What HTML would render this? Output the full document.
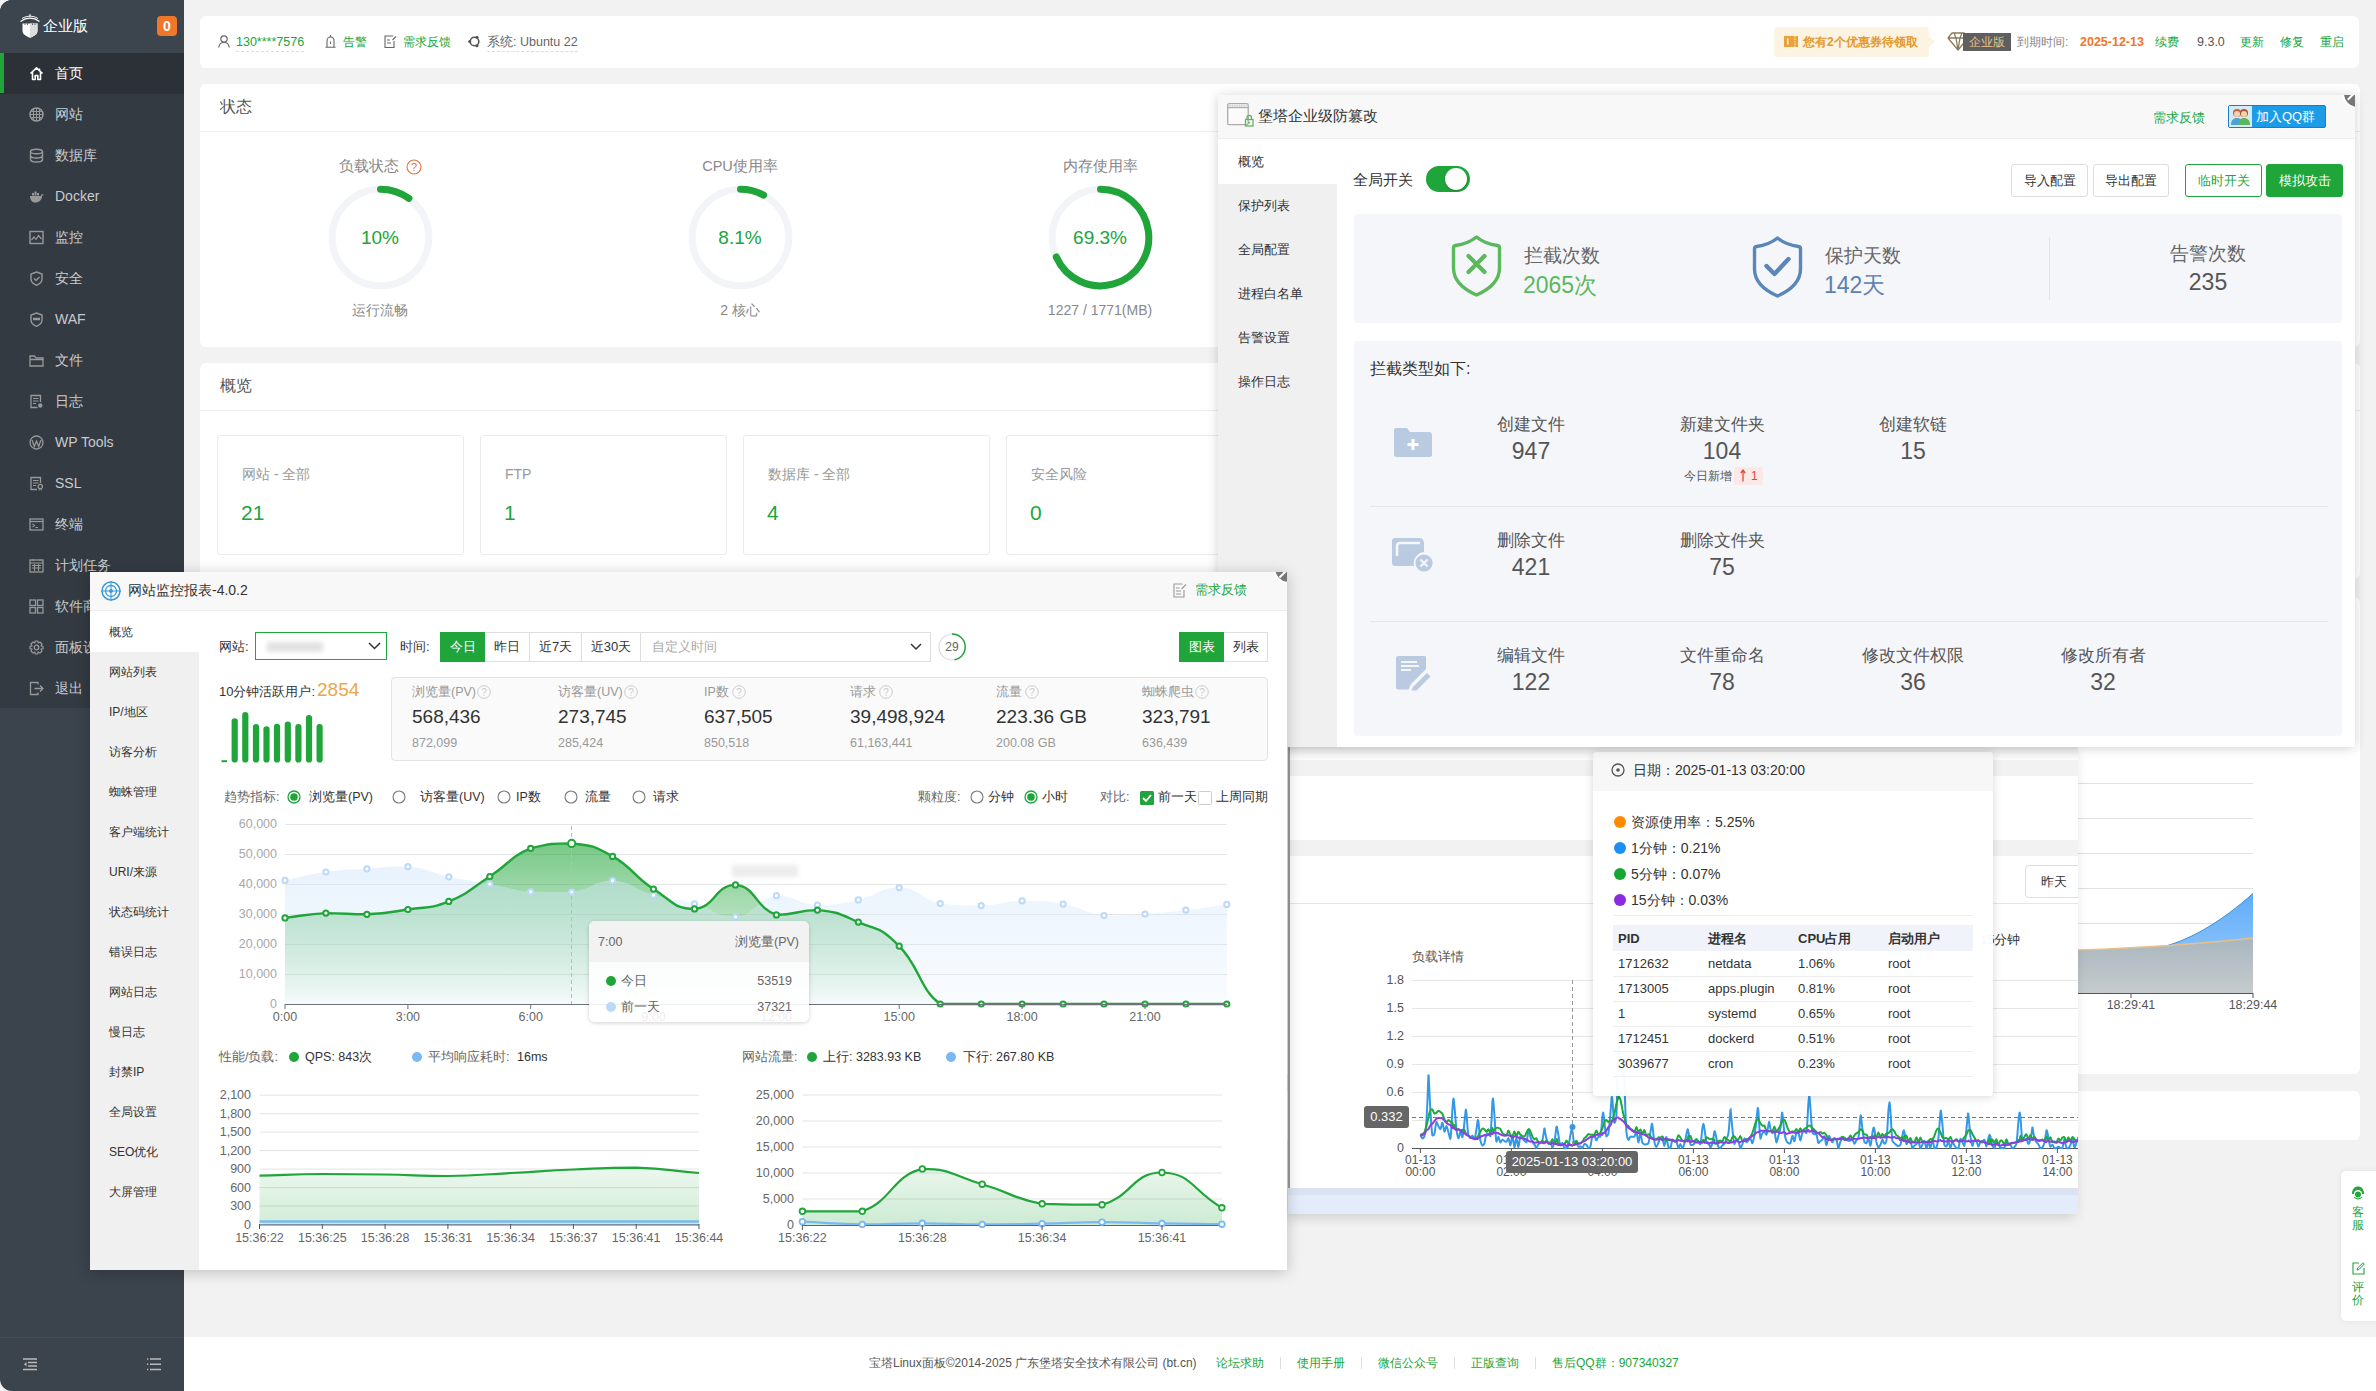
<!DOCTYPE html>
<html><head><meta charset="utf-8">
<style>
*{margin:0;padding:0;box-sizing:border-box}
html,body{width:2376px;height:1391px;overflow:hidden}
body{background:#f2f2f2;font-family:"Liberation Sans",sans-serif;font-size:14px;color:#666;position:relative}
.a{position:absolute}
.t{position:absolute;white-space:nowrap;line-height:1}
.card{position:absolute;background:#fff;border-radius:6px}
.g{color:#20a53a}
svg{position:absolute;overflow:visible}
#side{position:absolute;left:0;top:0;width:184px;height:1391px;background:#3b434c;border-radius:12px 0 0 12px;overflow:hidden}
#side .it{position:absolute;left:0;width:184px;height:41px;color:#c9cbcd;font-size:14px;line-height:41px;padding-left:55px}
#side .it svg{left:29px;top:13px}
#side .cur{background:#2c3138;color:#fff}
#side .cur:before{content:"";position:absolute;left:0;top:0;width:4px;height:40px;background:#20a53a}
.dash{border-bottom:1px dashed #ddd}
.ttl{position:absolute;left:20px;top:15px;font-size:16px;color:#555;line-height:1;white-space:nowrap}
.hline{position:absolute;left:0;height:1px;background:#eee}
.sub{position:absolute;top:72px;width:247px;height:120px;border:1px solid #ebebeb;border-radius:3px}
.sub .l{position:absolute;left:24px;top:30px;font-size:14px;color:#999;white-space:nowrap;line-height:16px}
.sub .v{position:absolute;left:23px;top:66px;font-size:21px;color:#20a53a;line-height:22px}

</style></head><body>
<!-- SIDEBAR -->
<div id="side">
  <div class="a" style="left:0;top:0;width:184px;height:53px;background:#3c444e"></div>
  <div class="a" style="left:0;top:53px;width:184px;height:655px;background:#333a42"></div>
  <div class="a" style="left:0;top:1337px;width:184px;height:1px;background:#434c56"></div>
  <!-- logo -->
  <svg style="left:19px;top:14px" width="22" height="24" viewBox="0 0 22 24">
    <path d="M1.5 7.5 C5 5 8 4.2 11 4.2 C14 4.2 17 5 20.5 7.5" fill="none" stroke="#fff" stroke-width="1.3"/>
    <path d="M3 4.5 C6 2.8 8.5 2.2 11 2.2 C13.5 2.2 16 2.8 19 4.5" fill="none" stroke="#fff" stroke-width="1"/>
    <path d="M11 0.3 V2.5" stroke="#fff" stroke-width="1.2"/>
    <path d="M3.5 9.5 H18.5 V17 C18.5 20 15 22.5 11 23.8 C7 22.5 3.5 20 3.5 17 Z" fill="#fff"/>
    <path d="M11 9.5 V23.8 C15 22.5 18.5 20 18.5 17 V9.5 Z" fill="#dcdcdc"/>
    <path d="M6 9.5 V11 M8.5 9.5 V11 M13.5 9.5 V11 M16 9.5 V11" stroke="#3c444e" stroke-width="0.8"/>
  </svg>
  <div class="t" style="left:43px;top:18px;font-size:15px;color:#fff">企业版</div>
  <div class="a" style="left:157px;top:16px;width:20px;height:20px;background:#f0762a;border-radius:4px;color:#fff;font-weight:bold;font-size:14px;line-height:20px;text-align:center">0</div>
  <!-- menu -->
  <div class="it cur" style="top:53px"><svg width="15" height="15" viewBox="0 0 15 15"><path d="M1.5 7.5 L7.5 1.8 L13.5 7.5 M3.5 6 V13.5 H6.2 V9.5 H8.8 V13.5 H11.5 V6" fill="none" stroke="#fff" stroke-width="1.6" stroke-linejoin="round"/><path d="M10.5 2.5 V4.5" stroke="#fff" stroke-width="1.5"/></svg>首页</div>
  <div class="it" style="top:94px"><svg width="15" height="15" viewBox="0 0 15 15"><circle cx="7.5" cy="7.5" r="6.5" fill="none" stroke="#999" stroke-width="1.5"/><path d="M1 7.5 H14 M7.5 1 V14 M2.5 4.5 H12.5 M2.5 10.5 H12.5 M4.5 2 V13 M10.5 2 V13" stroke="#999" stroke-width="1"/></svg>网站</div>
  <div class="it" style="top:135px"><svg width="15" height="15" viewBox="0 0 15 15"><ellipse cx="7.5" cy="3.5" rx="6" ry="2.3" fill="none" stroke="#999" stroke-width="1.4"/><path d="M1.5 3.5 V11.5 C1.5 13 4 14 7.5 14 C11 14 13.5 13 13.5 11.5 V3.5 M1.5 7.5 C1.5 9 4 10 7.5 10 C11 10 13.5 9 13.5 7.5" fill="none" stroke="#999" stroke-width="1.4"/></svg>数据库</div>
  <div class="it" style="top:176px"><svg width="15" height="15" viewBox="0 0 15 15"><path d="M1 7 H13 C13 11 10 13.5 6 13.5 C3 13.5 1 11 1 7 Z" fill="#999"/><rect x="3" y="4" width="2" height="2.5" fill="#999"/><rect x="5.5" y="2.5" width="2" height="4" fill="#999"/><rect x="8" y="4" width="2" height="2.5" fill="#999"/><path d="M12 6.5 C13 5.5 14.5 6 14.5 6" stroke="#999" stroke-width="1.2" fill="none"/></svg>Docker</div>
  <div class="it" style="top:217px"><svg width="15" height="15" viewBox="0 0 15 15"><rect x="1" y="1.5" width="13" height="12" fill="none" stroke="#999" stroke-width="1.4"/><path d="M2.5 10 L5 7 L7 9.5 L9.5 5.5 L12.5 9" fill="none" stroke="#999" stroke-width="1.2"/></svg>监控</div>
  <div class="it" style="top:258px"><svg width="15" height="15" viewBox="0 0 15 15"><path d="M7.5 1 L13 3 V8 C13 11 10.5 13 7.5 14.3 C4.5 13 2 11 2 8 V3 Z" fill="none" stroke="#999" stroke-width="1.4"/><path d="M5 7.5 L7 9.5 L10.5 6" fill="none" stroke="#999" stroke-width="1.3"/></svg>安全</div>
  <div class="it" style="top:299px"><svg width="15" height="15" viewBox="0 0 15 15"><path d="M7.5 1 L13 3 V8 C13 11 10.5 13 7.5 14.3 C4.5 13 2 11 2 8 V3 Z" fill="none" stroke="#999" stroke-width="1.4"/><path d="M4 7 H11" stroke="#999" stroke-width="2.5"/></svg>WAF</div>
  <div class="it" style="top:340px"><svg width="15" height="15" viewBox="0 0 15 15"><path d="M1 3 H5.5 L7 4.8 H14 V13 H1 Z M1 6.5 H14" fill="none" stroke="#999" stroke-width="1.3"/></svg>文件</div>
  <div class="it" style="top:381px"><svg width="15" height="15" viewBox="0 0 15 15"><path d="M11.5 8 V1.5 H2 V13.5 H8.5" fill="none" stroke="#999" stroke-width="1.3"/><path d="M4 4.5 H9.5 M4 7 H9.5 M4 9.5 H7" stroke="#999" stroke-width="1.1"/><circle cx="11.3" cy="11.5" r="2.2" fill="#999"/></svg>日志</div>
  <div class="it" style="top:422px"><svg width="15" height="15" viewBox="0 0 15 15"><circle cx="7.5" cy="7.5" r="6.5" fill="none" stroke="#999" stroke-width="1.3"/><path d="M3 5 L5.3 11.5 L7.5 6 L9.7 11.5 L12 5" fill="none" stroke="#999" stroke-width="1.3"/></svg>WP Tools</div>
  <div class="it" style="top:463px"><svg width="15" height="15" viewBox="0 0 15 15"><path d="M11.5 7 V1.5 H2 V13.5 H8" fill="none" stroke="#999" stroke-width="1.3"/><path d="M4 4.5 H9.5 M4 7 H9.5 M4 9.5 H7" stroke="#999" stroke-width="1.1"/><circle cx="11.3" cy="10.5" r="2.2" fill="none" stroke="#999" stroke-width="1.2"/><path d="M10.3 12.5 V14.5 M12.3 12.5 V14.5" stroke="#999"/></svg>SSL</div>
  <div class="it" style="top:504px"><svg width="15" height="15" viewBox="0 0 15 15"><rect x="1" y="2" width="13" height="11" fill="none" stroke="#999" stroke-width="1.3"/><path d="M1 4.5 H14" stroke="#999" stroke-width="1.3"/><path d="M3.5 7 L5.5 8.5 L3.5 10 M6.5 10.5 H9" fill="none" stroke="#999" stroke-width="1.1"/></svg>终端</div>
  <div class="it" style="top:545px"><svg width="15" height="15" viewBox="0 0 15 15"><rect x="1" y="2" width="13" height="12" fill="none" stroke="#999" stroke-width="1.3"/><path d="M1 5 H14 M4 1 V3 M11 1 V3 M3 7.5 H12 M3 10 H12 M5.5 6 V13 M9.5 6 V13" stroke="#999" stroke-width="1"/></svg>计划任务</div>
  <div class="it" style="top:586px"><svg width="15" height="15" viewBox="0 0 15 15"><rect x="1" y="1" width="5.5" height="5.5" fill="none" stroke="#999" stroke-width="1.3"/><rect x="8.5" y="1" width="5.5" height="5.5" fill="none" stroke="#999" stroke-width="1.3"/><rect x="1" y="8.5" width="5.5" height="5.5" fill="none" stroke="#999" stroke-width="1.3"/><rect x="8.5" y="8.5" width="5.5" height="5.5" fill="none" stroke="#999" stroke-width="1.3"/></svg>软件商店</div>
  <div class="it" style="top:627px"><svg width="15" height="15" viewBox="0 0 15 15"><circle cx="7.5" cy="7.5" r="2.3" fill="none" stroke="#999" stroke-width="1.3"/><path d="M6.3 1 H8.7 L9.2 3 L11 2 L13 4 L12 5.8 L14 6.3 V8.7 L12 9.2 L13 11 L11 13 L9.2 12 L8.7 14 H6.3 L5.8 12 L4 13 L2 11 L3 9.2 L1 8.7 V6.3 L3 5.8 L2 4 L4 2 L5.8 3 Z" fill="none" stroke="#999" stroke-width="1.2" stroke-linejoin="round"/></svg>面板设置</div>
  <div class="it" style="top:668px"><svg width="15" height="15" viewBox="0 0 15 15"><path d="M9 3.5 V1.5 H1.5 V13.5 H9 V11.5" fill="none" stroke="#999" stroke-width="1.3"/><path d="M5.5 7.5 H14 M11 4.5 L14 7.5 L11 10.5" fill="none" stroke="#999" stroke-width="1.3"/></svg>退出</div>
  <!-- bottom icons -->
  <svg style="left:23px;top:1358px" width="14" height="13" viewBox="0 0 14 13"><path d="M0 1 H14 M5 4.5 H14 M5 8 H14 M0 11.5 H14" stroke="#bbb" stroke-width="1.4"/><path d="M3.5 4 L1 6.2 L3.5 8.5 Z" fill="#bbb"/></svg>
  <svg style="left:147px;top:1358px" width="14" height="13" viewBox="0 0 14 13"><path d="M3 1 H14 M3 6.2 H14 M3 11.5 H14" stroke="#bbb" stroke-width="1.4"/><path d="M0 1 H1.3 M0 6.2 H1.3 M0 11.5 H1.3" stroke="#bbb" stroke-width="1.4"/></svg>
</div>

<!-- FOOTER -->
<div class="a" style="left:184px;top:1337px;width:2192px;height:54px;background:#fff"></div>
<div class="t" style="left:869px;top:1357px;font-size:12px;color:#555">宝塔Linux面板©2014-2025 广东堡塔安全技术有限公司 (bt.cn)</div>
<div class="t g" style="left:1216px;top:1357px;font-size:12px">论坛求助</div>
<div class="a" style="left:1280px;top:1357px;width:1px;height:12px;background:#ddd"></div>
<div class="t g" style="left:1297px;top:1357px;font-size:12px">使用手册</div>
<div class="a" style="left:1361px;top:1357px;width:1px;height:12px;background:#ddd"></div>
<div class="t g" style="left:1378px;top:1357px;font-size:12px">微信公众号</div>
<div class="a" style="left:1454px;top:1357px;width:1px;height:12px;background:#ddd"></div>
<div class="t g" style="left:1471px;top:1357px;font-size:12px">正版查询</div>
<div class="a" style="left:1535px;top:1357px;width:1px;height:12px;background:#ddd"></div>
<div class="t g" style="left:1552px;top:1357px;font-size:12px">售后QQ群：907340327</div>

<!-- HEADER -->
<div class="card" style="left:200px;top:16px;width:2159px;height:52px"></div>
<svg style="left:218px;top:35px" width="12" height="13" viewBox="0 0 12 13"><circle cx="6" cy="4" r="3.2" fill="none" stroke="#666" stroke-width="1.2"/><path d="M0.8 12.5 C1 9 3 7.5 6 7.5 C9 7.5 11 9 11.2 12.5" fill="none" stroke="#666" stroke-width="1.2"/></svg>
<div class="t g dash" style="left:236px;top:36px;font-size:12.5px;padding-bottom:2px">130****7576</div>
<svg style="left:325px;top:35px" width="11" height="13" viewBox="0 0 11 13"><path d="M2 12 V6 C2 3.5 3.5 2 5.5 2 C7.5 2 9 3.5 9 6 V12 M0.5 12.3 H10.5 M5.5 0 V1.5 M5.5 6.5 V9" fill="none" stroke="#666" stroke-width="1.1"/></svg>
<div class="t g" style="left:343px;top:36px;font-size:12px">告警</div>
<svg style="left:384px;top:35px" width="13" height="13" viewBox="0 0 13 13"><path d="M9 1 H1 V12.5 H10 V6" fill="none" stroke="#666" stroke-width="1.1"/><path d="M3 5 H6 M3 8 H7 M8.5 5 L12 1.5" stroke="#666" stroke-width="1.1"/></svg>
<div class="t g" style="left:403px;top:36px;font-size:12px">需求反馈</div>
<svg style="left:468px;top:35px" width="13" height="13" viewBox="0 0 13 13"><circle cx="6.5" cy="6.5" r="4.3" fill="none" stroke="#555" stroke-width="1.6"/><circle cx="1.7" cy="6.5" r="1.5" fill="#555"/><circle cx="9" cy="2.3" r="1.5" fill="#555"/><circle cx="9" cy="10.7" r="1.5" fill="#555"/></svg>
<div class="t dash" style="left:487px;top:36px;font-size:12.5px;color:#666;padding-bottom:2px">系统: Ubuntu 22</div>

<div class="a" style="left:1774px;top:27px;width:155px;height:30px;background:#fdf3e2;border-radius:4px"></div>
<div class="a" style="left:1929px;top:37px;width:0;height:0;border-top:5px solid transparent;border-bottom:5px solid transparent;border-left:6px solid #fdf3e2"></div>
<svg style="left:1784px;top:35px" width="14" height="13" viewBox="0 0 14 13"><rect x="0" y="1" width="14" height="11" fill="#e9a23b"/><rect x="3" y="3.5" width="1.5" height="6" fill="#fdf3e2"/><path d="M11 1 V12" stroke="#fdf3e2" stroke-dasharray="1.5 1" stroke-width="1"/></svg>
<div class="t" style="left:1803px;top:36px;font-size:12px;color:#e49a2d;font-weight:bold">您有2个优惠券待领取</div>
<svg style="left:1947px;top:32px" width="22" height="19" viewBox="0 0 22 19"><path d="M5 1 H17 L21 6 L11 18 L1 6 Z M1 6 H21 M7 1 L9 6 L11 18 L13 6 L15 1" fill="none" stroke="#8c7a5b" stroke-width="1.3" stroke-linejoin="round"/></svg>
<div class="a" style="left:1963px;top:33px;width:48px;height:18px;background:#5f5f5f;color:#e5c28a;font-size:12px;line-height:18px;text-align:center">企业版</div>
<div class="t" style="left:2017px;top:36px;font-size:12px;color:#888">到期时间:</div>
<div class="t" style="left:2080px;top:36px;font-size:12.5px;color:#f0762a;font-weight:bold">2025-12-13</div>
<div class="t g" style="left:2155px;top:36px;font-size:12px">续费</div>
<div class="t" style="left:2197px;top:36px;font-size:12.5px;color:#555">9.3.0</div>
<div class="t g" style="left:2240px;top:36px;font-size:12px">更新</div>
<div class="t g" style="left:2280px;top:36px;font-size:12px">修复</div>
<div class="t g" style="left:2320px;top:36px;font-size:12px">重启</div>

<!-- STATUS -->
<div class="card" style="left:200px;top:84px;width:2160px;height:263px">
  <div class="ttl">状态</div>
  <div class="hline" style="top:47px;width:2160px"></div>
</div>
<svg style="left:0;top:0" width="2376" height="400">
  <g fill="none" stroke-width="7">
    <circle cx="380.5" cy="237.5" r="48.3" stroke="#f2f4f8"/>
    <circle cx="740.5" cy="237.5" r="48.3" stroke="#f2f4f8"/>
    <circle cx="1100.5" cy="237.5" r="48.3" stroke="#f2f4f8"/>
    <g stroke="#20a53a" stroke-linecap="round">
      <path d="M380.5 189.2 A48.3 48.3 0 0 1 408.9 198.4"/>
      <path d="M740.5 189.2 A48.3 48.3 0 0 1 763.6 195.1"/>
      <path d="M1100.5 189.2 A48.3 48.3 0 1 1 1056.3 257"/>
    </g>
  </g>
</svg>
<div class="t" style="left:339px;top:159px;font-size:14.5px;color:#888">负载状态</div>
<svg style="left:406px;top:159px" width="16" height="16" viewBox="0 0 16 16"><circle cx="8" cy="8" r="7" fill="none" stroke="#e0733a" stroke-width="1.1"/><text x="8" y="12.2" font-size="11" text-anchor="middle" fill="#e0733a" font-family="Liberation Sans">?</text></svg>
<div class="t" style="left:640px;top:159px;width:200px;text-align:center;font-size:14.5px;color:#888">CPU使用率</div>
<div class="t" style="left:1000px;top:159px;width:200px;text-align:center;font-size:14.5px;color:#888">内存使用率</div>
<div class="t g" style="left:280px;top:228px;width:200px;text-align:center;font-size:19px">10%</div>
<div class="t g" style="left:640px;top:228px;width:200px;text-align:center;font-size:19px">8.1%</div>
<div class="t g" style="left:1000px;top:228px;width:200px;text-align:center;font-size:19px">69.3%</div>
<div class="t" style="left:280px;top:303px;width:200px;text-align:center;font-size:14px;color:#888">运行流畅</div>
<div class="t" style="left:640px;top:303px;width:200px;text-align:center;font-size:14px;color:#888">2 核心</div>
<div class="t" style="left:1000px;top:303px;width:200px;text-align:center;font-size:14px;color:#888">1227 / 1771(MB)</div>

<!-- OVERVIEW -->
<div class="card" style="left:200px;top:363px;width:2160px;height:216px">
  <div class="ttl">概览</div>
  <div class="hline" style="top:47px;width:2160px"></div>
  <div class="sub" style="left:17px"><div class="l">网站 - 全部</div><div class="v">21</div></div>
  <div class="sub" style="left:280px"><div class="l">FTP</div><div class="v">1</div></div>
  <div class="sub" style="left:543px"><div class="l">数据库 - 全部</div><div class="v">4</div></div>
  <div class="sub" style="left:806px"><div class="l">安全风险</div><div class="v">0</div></div>
</div>

<!-- lower background cards -->
<div class="card" style="left:200px;top:597px;width:2160px;height:477px"></div>
<div class="card" style="left:200px;top:1091px;width:2160px;height:49px"></div>
<!-- RIGHT CARD CHART -->
<svg style="left:0;top:0" width="2376" height="1100">
<defs><linearGradient id="gB" x1="0" y1="890" x2="0" y2="993" gradientUnits="userSpaceOnUse"><stop offset="0" stop-color="#5eabf8"/><stop offset="1" stop-color="#a3d0fb"/></linearGradient>
<linearGradient id="gS" x1="0" y1="930" x2="0" y2="993" gradientUnits="userSpaceOnUse"><stop offset="0" stop-color="#a4b3bd"/><stop offset="1" stop-color="#c6cbcd"/></linearGradient></defs>
<path d="M2078 783.5 H2253" stroke="#e0e0e0"/><path d="M2078 818.5 H2253" stroke="#e0e0e0"/><path d="M2078 853.5 H2253" stroke="#e0e0e0"/><path d="M2078 888.5 H2253" stroke="#e0e0e0"/><path d="M2078 923.5 H2253" stroke="#e0e0e0"/><path d="M2078 958.5 H2253" stroke="#e0e0e0"/><path d="M2078 952 C2115 952 2140 951.5 2158 948 C2190 941 2222 921 2253 893.5 V993 H2078 Z" fill="url(#gB)"/><path d="M2078 952 C2115 952 2140 951.5 2158 948 C2190 941 2222 921 2253 893.5" fill="none" stroke="#3d8fdc" stroke-width="1"/><path d="M2078 950 C2140 948 2200 944 2253 938 V993 H2078 Z" fill="url(#gS)"/><path d="M2078 950 C2140 948 2200 944 2253 938" fill="none" stroke="#e8c08a" stroke-width="1.3"/><path d="M2078 993.5 H2253" stroke="#555"/><path d="M2131 993 V998 M2253 993 V998" stroke="#555"/><text x="2131" y="1009" font-size="12.5" text-anchor="middle" fill="#555" font-family="Liberation Sans">18:29:41</text><text x="2253" y="1009" font-size="12.5" text-anchor="middle" fill="#555" font-family="Liberation Sans">18:29:44</text></svg>
<!-- LOAD PANEL -->
<div class="a" style="left:1288px;top:747px;width:790px;height:467px;background:#fff;box-shadow:-3px 3px 12px rgba(0,0,0,0.16);overflow:hidden">
  <div class="a" style="left:0;top:0;width:790px;height:14px;background:linear-gradient(#e6e6e6,#fff)"></div>
  <div class="a" style="left:0;top:13px;width:790px;height:16px;background:#f2f2f2"></div>
  <div class="a" style="left:0;top:93px;width:790px;height:16px;background:#f2f2f2"></div>
  <div class="a" style="left:0;top:156px;width:790px;height:1px;background:#e6e6e6"></div>
  <div class="a" style="left:0;top:0;width:1.5px;height:467px;background:#9a9a9a"></div>
  <div class="a" style="left:737px;top:118px;width:60px;height:33px;border:1px solid #ddd;border-radius:4px;background:#fff;color:#333;font-size:13px;line-height:31px;padding-left:15px">昨天</div>
  <div class="t" style="left:692px;top:186px;font-size:13px;color:#333">15分钟</div>
  <div class="a" style="left:0;top:441px;width:790px;height:26px;background:#e4ebfa"></div>
  <div class="a" style="left:0;top:441px;width:790px;height:7px;background:#dbe3f3"></div>
</div>
<div class="t" style="left:1412px;top:951px;font-size:12.5px;color:#555">负载详情</div>
<svg style="left:0;top:0" width="2376" height="1300"><path d="M1412 980.5 H2078" stroke="#e6e6e6"/><text x="1404" y="984" font-size="12.5" text-anchor="end" fill="#555" font-family="Liberation Sans">1.8</text><path d="M1412 1008.5 H2078" stroke="#e6e6e6"/><text x="1404" y="1012" font-size="12.5" text-anchor="end" fill="#555" font-family="Liberation Sans">1.5</text><path d="M1412 1036.5 H2078" stroke="#e6e6e6"/><text x="1404" y="1040" font-size="12.5" text-anchor="end" fill="#555" font-family="Liberation Sans">1.2</text><path d="M1412 1064.5 H2078" stroke="#e6e6e6"/><text x="1404" y="1068" font-size="12.5" text-anchor="end" fill="#555" font-family="Liberation Sans">0.9</text><path d="M1412 1092.5 H2078" stroke="#e6e6e6"/><text x="1404" y="1096" font-size="12.5" text-anchor="end" fill="#555" font-family="Liberation Sans">0.6</text><path d="M1412 1120.5 H2078" stroke="#e6e6e6"/><text x="1404" y="1124" font-size="12.5" text-anchor="end" fill="#555" font-family="Liberation Sans">0.3</text><text x="1404" y="1152" font-size="12.5" text-anchor="end" fill="#555" font-family="Liberation Sans">0</text><path d="M1412 1148.5 H2078" stroke="#555"/><path d="M1420.4 1148 V1153" stroke="#555"/><text x="1420.4" y="1164" font-size="12" text-anchor="middle" fill="#555" font-family="Liberation Sans">01-13</text><text x="1420.4" y="1176" font-size="12" text-anchor="middle" fill="#555" font-family="Liberation Sans">00:00</text><path d="M1511.4 1148 V1153" stroke="#555"/><text x="1511.4" y="1164" font-size="12" text-anchor="middle" fill="#555" font-family="Liberation Sans">01-13</text><text x="1511.4" y="1176" font-size="12" text-anchor="middle" fill="#555" font-family="Liberation Sans">02:00</text><path d="M1602.4 1148 V1153" stroke="#555"/><text x="1602.4" y="1164" font-size="12" text-anchor="middle" fill="#555" font-family="Liberation Sans">01-13</text><text x="1602.4" y="1176" font-size="12" text-anchor="middle" fill="#555" font-family="Liberation Sans">04:00</text><path d="M1693.4 1148 V1153" stroke="#555"/><text x="1693.4" y="1164" font-size="12" text-anchor="middle" fill="#555" font-family="Liberation Sans">01-13</text><text x="1693.4" y="1176" font-size="12" text-anchor="middle" fill="#555" font-family="Liberation Sans">06:00</text><path d="M1784.4 1148 V1153" stroke="#555"/><text x="1784.4" y="1164" font-size="12" text-anchor="middle" fill="#555" font-family="Liberation Sans">01-13</text><text x="1784.4" y="1176" font-size="12" text-anchor="middle" fill="#555" font-family="Liberation Sans">08:00</text><path d="M1875.4 1148 V1153" stroke="#555"/><text x="1875.4" y="1164" font-size="12" text-anchor="middle" fill="#555" font-family="Liberation Sans">01-13</text><text x="1875.4" y="1176" font-size="12" text-anchor="middle" fill="#555" font-family="Liberation Sans">10:00</text><path d="M1966.4 1148 V1153" stroke="#555"/><text x="1966.4" y="1164" font-size="12" text-anchor="middle" fill="#555" font-family="Liberation Sans">01-13</text><text x="1966.4" y="1176" font-size="12" text-anchor="middle" fill="#555" font-family="Liberation Sans">12:00</text><path d="M2057.4 1148 V1153" stroke="#555"/><text x="2057.4" y="1164" font-size="12" text-anchor="middle" fill="#555" font-family="Liberation Sans">01-13</text><text x="2057.4" y="1176" font-size="12" text-anchor="middle" fill="#555" font-family="Liberation Sans">14:00</text><defs><clipPath id="cL"><rect x="1412" y="960" width="666" height="190"/></clipPath></defs><g clip-path="url(#cL)"><path d="M1420.4 1134.6 C1421.0 1135.7 1421.7 1138.0 1422.4 1138.4 C1422.9 1138.6 1424.2 1137.3 1424.4 1136.5 C1425.4 1132.3 1426.1 1126.2 1426.4 1121.7 C1427.3 1108.0 1427.8 1089.7 1428.4 1075.9 C1428.4 1075.7 1428.6 1075.0 1428.6 1075.2 C1429.2 1085.3 1429.7 1099.7 1430.4 1110.2 C1430.9 1117.8 1431.3 1128.9 1432.4 1135.4 C1432.5 1136.1 1434.2 1134.7 1434.4 1134.0 C1435.4 1130.7 1435.5 1123.8 1436.4 1122.1 C1436.7 1121.4 1437.7 1124.8 1438.4 1126.0 C1438.9 1126.9 1440.0 1129.5 1440.4 1129.1 C1441.2 1128.4 1441.9 1122.2 1442.4 1122.5 C1443.1 1122.9 1443.7 1130.9 1444.4 1131.6 C1444.9 1132.0 1445.8 1125.8 1446.4 1125.9 C1447.0 1126.0 1447.8 1130.3 1448.4 1132.3 C1449.0 1134.2 1450.2 1140.0 1450.4 1138.7 C1451.4 1133.3 1451.7 1118.5 1452.4 1109.8 C1452.7 1106.4 1453.1 1099.3 1453.5 1098.5 C1453.7 1098.1 1454.2 1103.6 1454.4 1105.8 C1455.1 1112.7 1455.6 1122.0 1456.4 1128.8 C1456.8 1131.7 1457.7 1137.8 1458.4 1138.3 C1458.9 1138.7 1459.8 1131.9 1460.4 1131.7 C1461.0 1131.6 1462.1 1138.0 1462.4 1137.2 C1463.3 1135.3 1463.9 1127.2 1464.4 1122.9 C1464.9 1118.9 1465.3 1112.4 1465.8 1109.7 C1465.9 1109.2 1466.3 1111.5 1466.4 1112.2 C1467.1 1119.1 1467.3 1128.6 1468.4 1135.3 C1468.5 1136.0 1469.8 1136.7 1470.4 1136.7 C1471.0 1136.8 1471.9 1135.5 1472.4 1135.7 C1473.1 1136.1 1474.1 1139.3 1474.4 1138.8 C1475.3 1137.6 1475.9 1132.6 1476.4 1129.8 C1476.9 1126.9 1477.3 1122.1 1477.8 1120.0 C1477.9 1119.6 1478.3 1121.2 1478.4 1121.7 C1479.1 1127.3 1479.5 1134.9 1480.4 1140.5 C1480.7 1142.0 1481.6 1144.8 1482.4 1145.4 C1482.8 1145.7 1484.1 1144.2 1484.4 1143.4 C1485.3 1140.7 1485.4 1136.1 1486.4 1133.8 C1486.6 1133.3 1487.9 1133.6 1488.4 1133.9 C1489.1 1134.3 1490.3 1136.7 1490.4 1136.0 C1491.5 1127.2 1491.7 1112.4 1492.4 1102.3 C1492.5 1101.1 1492.9 1097.8 1493.0 1098.5 C1493.5 1101.6 1494.0 1109.8 1494.4 1114.7 C1495.0 1122.7 1495.4 1136.0 1496.4 1141.5 C1496.6 1142.6 1497.8 1136.6 1498.4 1136.7 C1499.0 1136.9 1499.6 1141.9 1500.4 1142.4 C1500.8 1142.7 1501.7 1139.9 1502.4 1139.7 C1502.9 1139.5 1503.7 1140.8 1504.4 1141.1 C1504.9 1141.4 1506.0 1141.9 1506.4 1141.6 C1507.2 1141.1 1508.0 1137.8 1508.4 1138.2 C1509.2 1138.9 1509.9 1145.6 1510.4 1145.3 C1511.1 1144.8 1511.9 1135.2 1512.4 1135.5 C1513.1 1135.8 1513.7 1146.7 1514.4 1147.2 C1514.9 1147.5 1515.8 1138.0 1516.4 1138.0 C1517.0 1138.0 1517.8 1147.1 1518.4 1146.9 C1519.0 1146.7 1519.5 1138.6 1520.4 1136.6 C1520.7 1136.1 1521.8 1138.0 1522.4 1138.6 C1523.0 1139.2 1523.8 1140.1 1524.4 1140.7 C1525.0 1141.2 1526.2 1142.8 1526.4 1142.3 C1527.4 1139.6 1527.7 1133.6 1528.4 1129.9 C1528.4 1129.7 1528.8 1129.2 1528.8 1129.3 C1529.4 1131.3 1529.8 1134.8 1530.4 1137.1 C1530.8 1138.7 1531.6 1140.8 1532.4 1142.3 C1532.8 1143.0 1533.9 1143.6 1534.4 1144.3 C1535.1 1145.3 1535.8 1148.0 1536.4 1148.0 C1537.0 1148.0 1537.6 1145.1 1538.4 1144.1 C1538.8 1143.6 1539.9 1143.4 1540.4 1142.9 C1541.1 1142.2 1542.1 1141.1 1542.4 1140.2 C1543.3 1136.8 1543.8 1132.0 1544.4 1128.5 C1544.4 1128.4 1544.5 1128.4 1544.5 1128.4 C1545.1 1131.4 1545.7 1135.5 1546.4 1138.5 C1546.8 1140.1 1547.6 1143.1 1548.4 1143.9 C1548.8 1144.3 1550.0 1141.9 1550.4 1142.3 C1551.2 1143.0 1551.8 1147.7 1552.4 1147.6 C1553.0 1147.6 1554.0 1143.6 1554.4 1141.7 C1555.2 1137.5 1555.7 1131.7 1556.4 1127.4 C1556.4 1127.1 1556.7 1126.3 1556.8 1126.5 C1557.3 1128.6 1557.9 1132.5 1558.4 1135.0 C1559.0 1138.2 1559.5 1143.7 1560.4 1145.5 C1560.7 1146.0 1562.0 1142.6 1562.4 1142.8 C1563.2 1143.3 1563.5 1146.9 1564.4 1148.0 C1564.7 1148.4 1565.9 1148.2 1566.4 1147.9 C1567.1 1147.6 1568.2 1146.8 1568.4 1146.1 C1569.4 1143.0 1569.7 1138.3 1570.4 1135.0 C1570.7 1133.3 1571.2 1130.2 1571.7 1129.3 C1571.8 1129.1 1572.3 1130.5 1572.4 1131.0 C1573.1 1134.8 1573.4 1141.4 1574.4 1143.8 C1574.6 1144.4 1576.0 1140.7 1576.4 1141.1 C1577.2 1141.6 1577.5 1145.7 1578.4 1146.8 C1578.7 1147.2 1579.9 1146.0 1580.4 1146.2 C1581.1 1146.4 1582.0 1148.3 1582.4 1148.0 C1583.2 1147.6 1583.6 1144.6 1584.4 1144.0 C1584.8 1143.6 1586.0 1144.3 1586.4 1144.8 C1587.2 1145.5 1587.7 1147.6 1588.4 1147.9 C1588.9 1148.1 1590.2 1147.2 1590.4 1146.5 C1591.4 1143.5 1591.4 1138.4 1592.4 1135.6 C1592.6 1135.1 1594.1 1135.0 1594.4 1135.4 C1595.3 1136.4 1595.7 1140.1 1596.4 1140.3 C1596.9 1140.5 1597.6 1137.4 1598.4 1136.6 C1598.8 1136.3 1600.3 1137.1 1600.4 1136.6 C1601.5 1131.2 1601.7 1122.8 1602.4 1117.0 C1602.6 1115.6 1603.0 1112.1 1603.2 1112.5 C1603.6 1113.5 1604.0 1118.9 1604.4 1121.6 C1605.0 1126.0 1605.4 1133.5 1606.4 1136.3 C1606.6 1137.0 1608.2 1134.5 1608.4 1133.5 C1609.4 1127.7 1609.8 1119.6 1610.4 1113.6 C1610.9 1108.5 1611.3 1099.9 1611.8 1096.7 C1611.9 1095.9 1612.3 1099.3 1612.4 1100.4 C1613.1 1107.1 1613.5 1119.1 1614.4 1122.7 C1614.7 1123.8 1616.3 1118.3 1616.4 1116.2 C1617.5 1091.6 1617.7 1058.6 1618.4 1033.9 C1618.5 1031.8 1618.8 1025.2 1618.9 1026.7 C1619.4 1035.9 1619.5 1056.8 1620.4 1069.6 C1620.5 1071.4 1622.1 1076.0 1622.4 1075.4 C1622.9 1074.3 1623.0 1063.1 1623.2 1064.0 C1623.6 1065.8 1624.1 1078.3 1624.4 1084.4 C1625.1 1098.5 1625.4 1117.4 1626.4 1131.4 C1626.6 1134.0 1627.6 1138.8 1628.4 1139.9 C1628.8 1140.4 1629.6 1137.4 1630.4 1136.7 C1630.8 1136.4 1631.8 1136.8 1632.4 1136.7 C1633.0 1136.7 1634.1 1137.1 1634.4 1136.7 C1635.3 1135.6 1636.0 1131.2 1636.4 1131.7 C1637.2 1132.9 1637.8 1142.3 1638.4 1142.5 C1639.0 1142.6 1639.8 1132.8 1640.4 1132.9 C1641.0 1132.9 1641.4 1140.0 1642.4 1142.8 C1642.6 1143.5 1643.7 1144.1 1644.4 1144.3 C1644.9 1144.5 1645.8 1144.4 1646.4 1144.3 C1647.0 1144.1 1648.2 1143.9 1648.4 1143.4 C1649.4 1140.4 1649.8 1135.7 1650.4 1132.4 C1650.9 1129.8 1651.4 1125.6 1651.9 1123.7 C1652.0 1123.4 1652.3 1124.7 1652.4 1125.2 C1653.1 1130.1 1653.5 1136.7 1654.4 1141.6 C1654.7 1143.3 1655.7 1146.8 1656.4 1147.0 C1656.9 1147.1 1657.8 1144.0 1658.4 1142.8 C1659.0 1141.5 1659.6 1139.3 1660.4 1138.5 C1660.8 1138.2 1662.1 1138.7 1662.4 1139.2 C1663.3 1140.8 1663.9 1146.0 1664.4 1145.7 C1665.1 1145.3 1665.8 1136.7 1666.4 1136.9 C1667.0 1137.1 1667.4 1144.2 1668.4 1146.9 C1668.6 1147.5 1670.1 1148.4 1670.4 1148.0 C1671.3 1146.4 1671.5 1141.5 1672.4 1139.9 C1672.7 1139.5 1673.7 1141.2 1674.4 1141.4 C1674.9 1141.7 1676.1 1141.1 1676.4 1141.6 C1677.3 1143.1 1677.7 1147.5 1678.4 1148.0 C1678.9 1148.3 1679.8 1144.1 1680.4 1144.1 C1681.0 1144.1 1681.8 1148.0 1682.4 1147.9 C1683.0 1147.9 1684.0 1145.0 1684.4 1143.6 C1685.2 1140.9 1685.8 1137.1 1686.4 1134.4 C1686.7 1132.9 1687.2 1130.0 1687.6 1129.3 C1687.8 1129.1 1688.3 1130.8 1688.4 1131.5 C1689.1 1135.2 1689.4 1140.7 1690.4 1144.1 C1690.6 1144.7 1691.9 1145.0 1692.4 1144.9 C1693.1 1144.8 1693.9 1143.9 1694.4 1143.3 C1695.1 1142.5 1695.7 1140.6 1696.4 1140.3 C1696.9 1140.1 1697.9 1141.3 1698.4 1141.9 C1699.1 1142.5 1700.2 1144.8 1700.4 1144.1 C1701.4 1140.6 1701.7 1132.9 1702.4 1128.1 C1702.6 1126.8 1703.1 1123.7 1703.4 1123.7 C1703.7 1123.8 1704.2 1127.0 1704.4 1128.5 C1705.1 1132.4 1705.4 1138.1 1706.4 1141.8 C1706.6 1142.4 1708.0 1142.2 1708.4 1142.7 C1709.2 1143.8 1709.8 1147.2 1710.4 1147.2 C1711.0 1147.3 1712.1 1144.4 1712.4 1143.0 C1713.3 1139.7 1713.7 1135.1 1714.4 1131.8 C1714.4 1131.6 1714.7 1131.0 1714.8 1131.2 C1715.3 1132.9 1715.9 1135.9 1716.4 1137.9 C1717.0 1140.6 1717.4 1144.4 1718.4 1146.8 C1718.6 1147.4 1719.9 1148.1 1720.4 1148.0 C1721.1 1147.7 1721.7 1146.1 1722.4 1145.4 C1722.9 1144.8 1724.0 1144.4 1724.4 1143.8 C1725.2 1142.6 1725.9 1140.6 1726.4 1139.2 C1727.1 1137.5 1728.2 1135.3 1728.4 1133.5 C1729.4 1126.5 1729.7 1117.0 1730.4 1110.0 C1730.4 1109.9 1730.6 1109.7 1730.6 1109.7 C1731.2 1115.3 1731.8 1123.2 1732.4 1128.9 C1732.9 1133.4 1733.4 1141.0 1734.4 1143.8 C1734.6 1144.5 1735.6 1141.1 1736.4 1140.5 C1736.8 1140.2 1738.1 1140.5 1738.4 1141.0 C1739.3 1142.8 1739.6 1147.4 1740.4 1148.0 C1740.8 1148.4 1741.9 1145.5 1742.4 1144.3 C1743.1 1142.6 1743.7 1138.7 1744.4 1138.4 C1744.9 1138.1 1745.6 1141.9 1746.4 1142.3 C1746.8 1142.6 1747.8 1141.1 1748.4 1140.6 C1749.0 1140.0 1750.0 1138.2 1750.4 1138.5 C1751.2 1139.0 1751.9 1143.6 1752.4 1143.2 C1753.1 1142.6 1754.0 1137.6 1754.4 1135.2 C1755.2 1130.8 1755.9 1124.9 1756.4 1120.6 C1756.9 1116.8 1757.3 1110.1 1757.8 1107.9 C1757.9 1107.3 1758.3 1110.2 1758.4 1111.2 C1759.1 1119.4 1759.4 1133.1 1760.4 1138.5 C1760.6 1139.7 1761.5 1134.6 1762.4 1133.2 C1762.7 1132.6 1763.9 1131.8 1764.4 1132.0 C1765.1 1132.3 1766.1 1135.2 1766.4 1134.7 C1767.3 1133.1 1767.8 1128.0 1768.4 1125.1 C1768.6 1124.2 1769.0 1121.5 1769.2 1121.9 C1769.6 1122.6 1769.9 1126.6 1770.4 1128.6 C1770.8 1130.0 1771.6 1132.7 1772.4 1133.2 C1772.8 1133.5 1774.2 1130.6 1774.4 1131.2 C1775.4 1133.4 1775.6 1141.5 1776.4 1142.3 C1776.8 1142.9 1777.8 1137.8 1778.4 1135.9 C1779.0 1133.6 1780.0 1130.6 1780.4 1128.3 C1781.1 1123.6 1781.5 1116.8 1782.1 1112.5 C1782.1 1112.3 1782.4 1113.0 1782.4 1113.3 C1783.1 1119.1 1783.6 1127.1 1784.4 1132.9 C1784.8 1135.4 1785.5 1138.7 1786.4 1140.9 C1786.7 1141.7 1787.7 1142.7 1788.4 1143.1 C1788.9 1143.4 1790.1 1143.7 1790.4 1143.2 C1791.3 1141.5 1791.7 1136.3 1792.4 1135.9 C1792.9 1135.7 1793.9 1141.6 1794.4 1141.3 C1795.1 1140.7 1795.4 1134.9 1796.4 1132.9 C1796.6 1132.4 1798.2 1132.6 1798.4 1133.0 C1799.4 1134.9 1799.8 1140.7 1800.4 1140.6 C1801.0 1140.5 1801.5 1134.9 1802.4 1132.6 C1802.7 1131.7 1803.8 1130.0 1804.4 1130.1 C1805.0 1130.1 1806.3 1133.9 1806.4 1133.1 C1807.5 1125.9 1807.7 1112.3 1808.4 1103.4 C1808.6 1101.1 1809.1 1095.2 1809.3 1095.7 C1809.7 1096.6 1810.1 1104.2 1810.4 1107.8 C1811.0 1115.2 1811.3 1125.3 1812.4 1132.5 C1812.5 1133.2 1813.7 1134.0 1814.4 1134.3 C1814.9 1134.5 1816.2 1133.7 1816.4 1134.2 C1817.4 1136.3 1817.5 1141.3 1818.4 1142.9 C1818.7 1143.3 1819.8 1141.6 1820.4 1141.1 C1821.0 1140.7 1821.9 1140.3 1822.4 1139.7 C1823.1 1138.8 1824.0 1135.8 1824.4 1136.3 C1825.2 1137.5 1825.8 1145.0 1826.4 1145.2 C1827.0 1145.3 1827.7 1139.7 1828.4 1137.4 C1828.6 1136.9 1829.1 1135.7 1829.3 1135.9 C1829.7 1136.1 1830.0 1137.7 1830.4 1138.5 C1831.0 1139.7 1831.8 1142.3 1832.4 1142.3 C1833.0 1142.3 1833.6 1139.2 1834.4 1138.7 C1834.8 1138.4 1836.2 1139.1 1836.4 1139.6 C1837.4 1141.9 1837.7 1147.6 1838.4 1148.0 C1838.9 1148.3 1839.6 1143.7 1840.4 1142.0 C1840.8 1141.0 1841.6 1139.4 1842.4 1138.8 C1842.8 1138.5 1843.8 1138.9 1844.4 1139.0 C1845.0 1139.1 1845.8 1139.3 1846.4 1139.6 C1847.0 1139.9 1847.8 1140.7 1848.4 1140.8 C1849.0 1141.0 1849.9 1140.8 1850.4 1140.6 C1851.1 1140.3 1852.0 1138.7 1852.4 1139.0 C1853.2 1139.7 1853.7 1143.6 1854.4 1143.8 C1854.9 1144.0 1855.7 1141.2 1856.4 1140.2 C1856.9 1139.4 1858.3 1138.8 1858.4 1138.0 C1859.5 1131.7 1859.7 1122.8 1860.4 1116.3 C1860.4 1116.0 1860.8 1115.1 1860.8 1115.3 C1861.4 1118.8 1861.9 1124.8 1862.4 1128.9 C1862.9 1132.8 1863.4 1138.3 1864.4 1141.9 C1864.6 1142.5 1866.0 1143.4 1866.4 1143.1 C1867.2 1142.5 1867.9 1138.5 1868.4 1138.8 C1869.1 1139.3 1870.0 1146.3 1870.4 1145.7 C1871.2 1144.7 1871.7 1137.0 1872.4 1133.3 C1872.7 1131.5 1873.3 1128.3 1873.7 1127.5 C1873.9 1127.2 1874.3 1128.9 1874.4 1129.6 C1875.1 1133.3 1875.6 1138.3 1876.4 1141.9 C1876.8 1143.5 1877.6 1146.7 1878.4 1147.3 C1878.8 1147.6 1880.0 1145.6 1880.4 1144.8 C1881.2 1143.4 1881.7 1139.9 1882.4 1139.8 C1882.9 1139.6 1883.7 1143.6 1884.4 1143.8 C1884.9 1143.9 1886.3 1142.0 1886.4 1141.0 C1887.5 1132.1 1887.7 1120.0 1888.4 1111.0 C1888.6 1108.3 1889.1 1102.3 1889.4 1102.3 C1889.7 1102.2 1890.2 1108.1 1890.4 1110.6 C1891.1 1119.7 1891.3 1131.9 1892.4 1140.8 C1892.5 1141.7 1893.8 1142.5 1894.4 1143.2 C1895.0 1143.8 1895.7 1144.6 1896.4 1145.1 C1896.9 1145.5 1897.8 1146.1 1898.4 1146.0 C1899.0 1145.9 1900.2 1145.4 1900.4 1144.7 C1901.4 1142.2 1901.8 1138.4 1902.4 1135.6 C1902.8 1134.0 1903.2 1131.1 1903.7 1130.3 C1903.8 1130.0 1904.3 1131.4 1904.4 1131.9 C1905.1 1135.5 1905.5 1141.8 1906.4 1144.0 C1906.7 1144.6 1907.7 1141.9 1908.4 1141.2 C1908.9 1140.8 1910.1 1140.1 1910.4 1140.5 C1911.3 1142.1 1911.5 1146.9 1912.4 1148.0 C1912.7 1148.4 1913.7 1146.3 1914.4 1145.6 C1914.9 1145.1 1915.9 1144.8 1916.4 1144.2 C1917.1 1143.5 1918.0 1141.2 1918.4 1141.6 C1919.2 1142.3 1919.6 1147.4 1920.4 1148.0 C1920.8 1148.3 1921.8 1145.7 1922.4 1144.6 C1923.0 1143.5 1924.0 1140.4 1924.4 1140.8 C1925.2 1141.4 1925.7 1147.8 1926.4 1148.0 C1926.9 1148.2 1927.8 1142.1 1928.4 1142.1 C1929.0 1142.1 1929.9 1148.4 1930.4 1148.0 C1931.1 1147.4 1931.8 1138.6 1932.4 1138.6 C1933.0 1138.6 1933.4 1145.8 1934.4 1148.0 C1934.6 1148.5 1936.2 1148.0 1936.4 1147.5 C1937.4 1145.0 1938.1 1140.9 1938.4 1138.0 C1939.3 1130.5 1939.7 1120.3 1940.4 1112.8 C1940.5 1112.1 1940.8 1110.2 1940.9 1110.7 C1941.4 1113.6 1942.0 1120.1 1942.4 1124.2 C1943.0 1130.4 1943.3 1138.9 1944.4 1144.9 C1944.5 1145.6 1946.0 1146.8 1946.4 1146.5 C1947.2 1145.8 1947.9 1141.1 1948.4 1141.3 C1949.1 1141.6 1949.8 1147.9 1950.4 1148.0 C1951.0 1148.1 1951.7 1142.4 1952.4 1141.9 C1952.9 1141.7 1953.7 1144.5 1954.4 1145.5 C1954.9 1146.3 1955.7 1147.5 1956.4 1148.0 C1956.9 1148.3 1958.2 1148.5 1958.4 1148.0 C1959.4 1145.7 1959.6 1140.0 1960.4 1138.8 C1960.8 1138.3 1961.8 1141.3 1962.4 1142.3 C1963.0 1143.4 1964.2 1146.5 1964.4 1145.8 C1965.4 1142.6 1965.8 1134.2 1966.4 1129.2 C1966.9 1124.5 1967.5 1117.8 1968.1 1113.5 C1968.1 1113.3 1968.4 1113.8 1968.4 1114.0 C1969.1 1120.7 1969.6 1129.6 1970.4 1136.2 C1970.8 1139.2 1971.7 1145.2 1972.4 1145.9 C1972.9 1146.3 1973.5 1141.1 1974.4 1140.1 C1974.7 1139.7 1976.1 1140.4 1976.4 1141.0 C1977.3 1142.4 1977.7 1146.4 1978.4 1146.6 C1978.9 1146.7 1979.6 1143.0 1980.4 1142.1 C1980.8 1141.8 1981.9 1142.7 1982.4 1142.4 C1983.1 1141.9 1984.0 1139.3 1984.4 1139.7 C1985.2 1140.5 1985.9 1146.6 1986.4 1146.4 C1987.1 1146.1 1987.7 1140.6 1988.4 1138.2 C1988.7 1137.2 1989.2 1135.2 1989.6 1134.9 C1989.8 1134.8 1990.3 1136.1 1990.4 1136.6 C1991.1 1139.2 1991.5 1143.0 1992.4 1145.5 C1992.7 1146.3 1993.9 1148.1 1994.4 1147.9 C1995.1 1147.5 1995.5 1144.2 1996.4 1143.2 C1996.7 1142.9 1998.1 1142.9 1998.4 1143.3 C1999.3 1144.3 1999.5 1147.0 2000.4 1148.0 C2000.7 1148.4 2001.8 1148.0 2002.4 1148.0 C2003.0 1148.0 2004.1 1148.4 2004.4 1148.0 C2005.3 1146.5 2005.6 1142.1 2006.4 1141.5 C2006.8 1141.1 2007.6 1143.9 2008.4 1144.7 C2008.8 1145.1 2009.9 1144.9 2010.4 1145.3 C2011.1 1145.9 2011.7 1147.7 2012.4 1148.0 C2012.9 1148.2 2014.0 1147.5 2014.4 1147.1 C2015.2 1146.3 2016.2 1145.0 2016.4 1143.9 C2017.4 1137.5 2017.7 1128.6 2018.4 1122.1 C2018.7 1119.2 2019.2 1113.7 2019.6 1112.5 C2019.8 1112.0 2020.3 1115.4 2020.4 1116.6 C2021.1 1123.8 2021.3 1134.2 2022.4 1140.7 C2022.5 1141.3 2023.9 1140.5 2024.4 1140.3 C2025.1 1140.0 2026.0 1138.5 2026.4 1138.9 C2027.2 1139.7 2027.7 1143.9 2028.4 1144.0 C2028.9 1144.2 2030.1 1141.2 2030.4 1139.8 C2031.3 1136.2 2031.8 1131.2 2032.4 1127.5 C2032.4 1127.5 2032.5 1127.4 2032.5 1127.5 C2033.1 1130.6 2033.6 1135.0 2034.4 1138.2 C2034.7 1139.5 2035.7 1141.1 2036.4 1142.2 C2036.9 1143.0 2037.9 1143.6 2038.4 1144.3 C2039.1 1145.4 2039.6 1147.4 2040.4 1148.0 C2040.8 1148.3 2042.1 1147.9 2042.4 1147.5 C2043.3 1146.4 2044.0 1144.2 2044.4 1142.7 C2045.2 1139.3 2045.7 1134.4 2046.4 1130.9 C2046.4 1130.7 2046.7 1130.1 2046.8 1130.3 C2047.3 1132.0 2047.9 1135.3 2048.4 1137.4 C2049.0 1140.2 2049.5 1145.1 2050.4 1146.7 C2050.7 1147.2 2051.9 1144.5 2052.4 1144.7 C2053.1 1144.9 2053.6 1147.3 2054.4 1148.0 C2054.8 1148.3 2055.9 1148.2 2056.4 1148.0 C2057.1 1147.8 2057.8 1146.7 2058.4 1146.7 C2059.0 1146.7 2059.8 1147.8 2060.4 1148.0 C2061.0 1148.1 2062.2 1148.3 2062.4 1147.8 C2063.4 1145.6 2063.8 1139.0 2064.4 1139.0 C2065.0 1138.9 2065.4 1145.5 2066.4 1147.7 C2066.6 1148.2 2068.0 1148.3 2068.4 1148.0 C2069.2 1147.5 2070.0 1146.1 2070.4 1145.1 C2071.2 1143.1 2071.9 1137.9 2072.4 1138.2 C2073.1 1138.6 2073.6 1146.6 2074.4 1147.5 C2074.8 1148.0 2075.9 1144.2 2076.4 1142.7 C2077.1 1141.0 2077.8 1138.6 2078.4 1136.8" fill="none" stroke="#3399e6" stroke-width="2"/><path d="M1420.4 1134.4 C1421.0 1134.3 1421.9 1134.3 1422.4 1134.1 C1423.1 1133.7 1424.0 1133.0 1424.4 1132.3 C1425.2 1130.8 1425.9 1128.4 1426.4 1126.6 C1427.1 1123.9 1427.8 1120.3 1428.4 1117.5 C1428.5 1117.3 1428.5 1116.9 1428.6 1116.6 C1429.1 1114.6 1429.5 1111.6 1430.4 1110.0 C1430.7 1109.5 1432.0 1109.2 1432.4 1109.5 C1433.2 1110.3 1433.6 1112.9 1434.4 1113.6 C1434.8 1113.9 1435.9 1113.2 1436.4 1112.9 C1437.1 1112.4 1437.7 1110.8 1438.4 1110.7 C1438.9 1110.6 1439.8 1111.6 1440.4 1112.0 C1441.0 1112.5 1442.0 1113.1 1442.4 1113.8 C1443.2 1115.3 1443.6 1117.8 1444.4 1119.4 C1444.8 1120.3 1445.8 1122.0 1446.4 1122.1 C1447.0 1122.2 1447.8 1120.0 1448.4 1120.0 C1449.0 1119.9 1449.7 1121.3 1450.4 1121.7 C1450.9 1122.1 1452.1 1122.1 1452.4 1122.7 C1453.1 1124.1 1453.1 1127.7 1453.5 1128.2 C1453.7 1128.4 1454.0 1125.0 1454.4 1125.1 C1454.9 1125.3 1455.6 1128.4 1456.4 1129.3 C1456.8 1129.7 1457.8 1129.3 1458.4 1129.5 C1459.0 1129.6 1459.8 1130.1 1460.4 1130.2 C1461.0 1130.2 1461.8 1129.9 1462.4 1129.9 C1463.0 1129.8 1464.1 1129.4 1464.4 1129.8 C1465.1 1130.6 1465.3 1132.8 1465.8 1134.0 C1465.9 1134.2 1466.2 1134.3 1466.4 1134.5 C1467.0 1134.9 1467.8 1135.6 1468.4 1136.0 C1469.0 1136.5 1469.8 1137.0 1470.4 1137.4 C1471.0 1137.7 1471.8 1138.1 1472.4 1138.3 C1473.0 1138.5 1473.8 1138.6 1474.4 1138.6 C1475.0 1138.5 1475.9 1138.2 1476.4 1137.8 C1476.9 1137.5 1477.4 1136.9 1477.8 1136.4 C1478.0 1136.2 1478.2 1135.8 1478.4 1135.5 C1479.0 1134.3 1479.7 1132.7 1480.4 1131.5 C1480.9 1130.6 1481.6 1129.0 1482.4 1128.6 C1482.8 1128.3 1483.9 1128.9 1484.4 1129.3 C1485.1 1129.9 1485.8 1131.8 1486.4 1131.8 C1487.0 1131.8 1487.9 1129.0 1488.4 1129.2 C1489.1 1129.4 1489.9 1133.5 1490.4 1133.3 C1491.1 1133.2 1491.9 1128.3 1492.4 1128.0 C1492.7 1127.8 1492.6 1131.0 1493.0 1131.4 C1493.2 1131.6 1494.0 1130.2 1494.4 1129.8 C1495.0 1129.1 1495.7 1128.1 1496.4 1127.8 C1496.9 1127.5 1497.8 1127.7 1498.4 1127.9 C1499.0 1128.1 1500.0 1128.5 1500.4 1129.0 C1501.2 1130.0 1501.6 1131.9 1502.4 1133.0 C1502.8 1133.6 1503.8 1134.2 1504.4 1134.6 C1505.0 1134.9 1506.1 1135.8 1506.4 1135.4 C1507.3 1134.6 1507.8 1130.7 1508.4 1130.6 C1509.0 1130.5 1509.7 1133.5 1510.4 1134.7 C1510.9 1135.4 1512.0 1137.0 1512.4 1136.7 C1513.2 1136.1 1513.8 1131.6 1514.4 1131.5 C1515.0 1131.5 1515.8 1136.1 1516.4 1136.2 C1517.0 1136.2 1517.7 1132.0 1518.4 1131.8 C1518.9 1131.6 1519.7 1134.1 1520.4 1134.8 C1520.9 1135.3 1521.8 1135.6 1522.4 1135.9 C1523.0 1136.1 1524.0 1136.8 1524.4 1136.5 C1525.2 1135.8 1525.8 1133.8 1526.4 1132.7 C1527.0 1131.7 1527.8 1130.3 1528.4 1129.4 C1528.5 1129.3 1528.7 1129.3 1528.8 1129.3 C1529.3 1129.8 1530.1 1130.5 1530.4 1131.2 C1531.2 1132.7 1531.7 1135.0 1532.4 1136.5 C1532.9 1137.4 1533.7 1138.9 1534.4 1139.3 C1534.9 1139.5 1536.0 1138.0 1536.4 1138.3 C1537.2 1139.0 1537.6 1141.6 1538.4 1142.4 C1538.8 1142.8 1539.9 1142.8 1540.4 1142.6 C1541.1 1142.3 1541.8 1140.7 1542.4 1140.7 C1543.0 1140.8 1543.8 1142.3 1544.4 1142.9 C1544.4 1142.9 1544.5 1142.9 1544.5 1142.9 C1545.1 1142.2 1545.8 1140.6 1546.4 1140.6 C1547.0 1140.7 1547.7 1142.8 1548.4 1143.3 C1548.9 1143.6 1550.0 1143.6 1550.4 1143.2 C1551.2 1142.4 1551.8 1139.1 1552.4 1139.2 C1553.0 1139.4 1553.8 1143.8 1554.4 1143.9 C1555.0 1144.1 1555.8 1141.3 1556.4 1140.1 C1556.5 1139.8 1556.7 1138.9 1556.8 1139.1 C1557.3 1140.0 1557.6 1142.8 1558.4 1143.9 C1558.7 1144.4 1559.8 1144.3 1560.4 1144.4 C1561.0 1144.6 1561.8 1144.8 1562.4 1144.8 C1563.0 1144.8 1564.0 1144.8 1564.4 1144.4 C1565.2 1143.6 1565.7 1140.8 1566.4 1140.6 C1566.9 1140.5 1567.7 1142.8 1568.4 1143.5 C1568.9 1144.1 1569.7 1144.9 1570.4 1145.2 C1570.7 1145.4 1571.3 1145.2 1571.7 1145.2 C1571.9 1145.2 1572.2 1145.2 1572.4 1145.2 C1573.0 1145.0 1574.0 1145.0 1574.4 1144.5 C1575.2 1143.6 1575.8 1140.8 1576.4 1140.7 C1577.0 1140.6 1577.6 1143.4 1578.4 1143.8 C1578.8 1144.0 1579.8 1143.2 1580.4 1142.9 C1581.0 1142.7 1582.0 1142.5 1582.4 1142.0 C1583.2 1141.0 1583.6 1139.2 1584.4 1138.2 C1584.8 1137.6 1585.9 1137.1 1586.4 1136.5 C1587.1 1135.9 1587.7 1134.4 1588.4 1134.1 C1588.9 1133.9 1589.8 1134.7 1590.4 1134.8 C1591.0 1134.9 1591.8 1134.8 1592.4 1134.8 C1593.0 1134.7 1594.0 1134.9 1594.4 1134.5 C1595.2 1133.6 1595.8 1130.4 1596.4 1130.4 C1597.0 1130.4 1597.6 1134.3 1598.4 1134.7 C1598.8 1134.9 1600.0 1133.4 1600.4 1132.7 C1601.2 1131.4 1601.9 1129.5 1602.4 1128.1 C1602.7 1127.4 1602.9 1126.3 1603.2 1125.5 C1603.5 1124.4 1603.9 1122.9 1604.4 1122.0 C1604.8 1121.3 1605.8 1120.1 1606.4 1120.1 C1607.0 1120.1 1607.8 1122.0 1608.4 1122.1 C1609.0 1122.2 1609.8 1120.7 1610.4 1120.6 C1610.8 1120.5 1611.5 1121.5 1611.8 1121.4 C1612.1 1121.3 1612.3 1120.4 1612.4 1120.0 C1613.0 1118.0 1613.9 1115.3 1614.4 1113.3 C1615.1 1110.5 1615.7 1106.7 1616.4 1103.9 C1616.9 1101.8 1617.7 1099.1 1618.4 1097.1 C1618.5 1096.9 1618.8 1096.6 1618.9 1096.7 C1619.4 1097.3 1620.2 1098.5 1620.4 1099.5 C1621.2 1102.4 1621.8 1106.4 1622.4 1109.4 C1622.7 1110.7 1622.9 1112.4 1623.2 1113.6 C1623.5 1114.9 1624.0 1116.5 1624.4 1117.8 C1625.0 1119.8 1625.5 1122.8 1626.4 1124.6 C1626.7 1125.2 1627.9 1125.4 1628.4 1126.0 C1629.1 1126.7 1629.7 1128.1 1630.4 1128.9 C1630.9 1129.3 1631.9 1129.5 1632.4 1129.9 C1633.1 1130.5 1634.0 1132.4 1634.4 1132.1 C1635.2 1131.6 1635.8 1127.1 1636.4 1127.1 C1637.0 1127.0 1637.7 1131.5 1638.4 1132.0 C1638.9 1132.2 1639.9 1129.2 1640.4 1129.4 C1641.1 1129.8 1641.8 1134.0 1642.4 1134.1 C1643.0 1134.2 1643.9 1129.9 1644.4 1130.1 C1645.1 1130.5 1645.6 1135.1 1646.4 1136.0 C1646.8 1136.4 1647.8 1134.3 1648.4 1134.3 C1649.0 1134.3 1649.9 1135.2 1650.4 1135.8 C1651.0 1136.5 1651.4 1137.7 1651.9 1138.4 C1652.0 1138.6 1652.2 1138.6 1652.4 1138.6 C1653.0 1138.8 1653.8 1139.1 1654.4 1139.2 C1655.0 1139.3 1655.9 1139.8 1656.4 1139.5 C1657.1 1139.2 1657.7 1137.7 1658.4 1137.4 C1658.9 1137.1 1659.8 1137.8 1660.4 1137.7 C1661.0 1137.5 1662.0 1136.3 1662.4 1136.5 C1663.2 1136.9 1663.6 1139.1 1664.4 1139.8 C1664.8 1140.1 1665.8 1139.9 1666.4 1139.9 C1667.0 1140.0 1667.8 1140.0 1668.4 1140.0 C1669.0 1140.1 1669.8 1140.2 1670.4 1140.2 C1671.0 1140.2 1671.8 1140.1 1672.4 1140.1 C1673.0 1140.2 1673.8 1140.4 1674.4 1140.5 C1675.0 1140.5 1676.1 1141.0 1676.4 1140.6 C1677.3 1139.5 1677.6 1136.1 1678.4 1135.4 C1678.8 1135.1 1679.9 1136.8 1680.4 1137.5 C1681.1 1138.5 1681.6 1140.2 1682.4 1140.9 C1682.8 1141.3 1683.9 1141.2 1684.4 1141.0 C1685.1 1140.7 1685.9 1139.4 1686.4 1139.4 C1686.8 1139.4 1687.4 1141.3 1687.6 1141.0 C1688.0 1140.3 1687.8 1137.2 1688.4 1136.1 C1688.6 1135.7 1690.1 1135.6 1690.4 1136.0 C1691.3 1137.1 1691.5 1140.1 1692.4 1141.3 C1692.7 1141.7 1693.9 1141.5 1694.4 1141.2 C1695.1 1140.7 1695.8 1138.8 1696.4 1138.9 C1697.0 1138.9 1697.7 1140.8 1698.4 1141.4 C1698.9 1141.8 1699.8 1142.0 1700.4 1142.2 C1701.0 1142.3 1702.0 1142.7 1702.4 1142.4 C1702.9 1142.0 1703.1 1139.6 1703.4 1139.7 C1703.7 1139.7 1704.1 1142.8 1704.4 1142.6 C1705.0 1142.2 1705.5 1138.3 1706.4 1137.4 C1706.7 1137.0 1707.8 1138.0 1708.4 1138.3 C1709.0 1138.6 1709.8 1139.2 1710.4 1139.3 C1711.0 1139.4 1711.8 1138.7 1712.4 1138.8 C1713.0 1138.9 1714.1 1139.4 1714.4 1139.9 C1714.8 1140.7 1714.4 1142.6 1714.8 1143.3 C1715.0 1143.7 1716.0 1143.5 1716.4 1143.3 C1717.1 1142.9 1717.7 1141.6 1718.4 1141.1 C1718.9 1140.8 1719.8 1140.6 1720.4 1140.6 C1721.0 1140.7 1722.0 1141.7 1722.4 1141.3 C1723.2 1140.6 1723.7 1137.5 1724.4 1137.1 C1724.9 1136.9 1725.7 1138.6 1726.4 1139.1 C1726.9 1139.5 1727.8 1139.8 1728.4 1140.2 C1729.0 1140.7 1729.8 1141.5 1730.4 1142.0 C1730.4 1142.0 1730.6 1142.0 1730.6 1142.0 C1731.2 1140.6 1731.6 1138.3 1732.4 1137.1 C1732.7 1136.6 1733.9 1136.0 1734.4 1136.3 C1735.1 1136.6 1735.6 1138.5 1736.4 1139.1 C1736.8 1139.5 1738.0 1139.7 1738.4 1139.3 C1739.2 1138.8 1739.9 1135.9 1740.4 1136.1 C1741.1 1136.4 1741.5 1140.0 1742.4 1141.0 C1742.7 1141.4 1743.9 1141.2 1744.4 1140.9 C1745.1 1140.6 1745.7 1139.4 1746.4 1139.0 C1746.9 1138.7 1747.9 1139.1 1748.4 1138.8 C1749.1 1138.4 1749.9 1137.4 1750.4 1136.7 C1751.1 1135.6 1751.9 1134.0 1752.4 1132.8 C1753.1 1131.0 1753.8 1128.4 1754.4 1126.5 C1755.0 1124.7 1755.6 1122.2 1756.4 1120.5 C1756.6 1120.0 1757.4 1119.3 1757.8 1119.1 C1758.0 1119.0 1758.3 1119.2 1758.4 1119.4 C1759.1 1120.4 1759.7 1122.1 1760.4 1123.2 C1760.9 1124.0 1761.7 1125.3 1762.4 1125.8 C1762.9 1126.0 1764.1 1125.1 1764.4 1125.5 C1765.3 1126.6 1765.5 1129.6 1766.4 1130.9 C1766.7 1131.4 1767.8 1131.1 1768.4 1131.2 C1768.6 1131.3 1769.0 1131.4 1769.2 1131.3 C1769.6 1131.3 1770.0 1130.9 1770.4 1131.0 C1771.0 1131.0 1772.1 1131.9 1772.4 1131.6 C1773.3 1130.6 1773.8 1126.4 1774.4 1126.4 C1775.0 1126.5 1775.7 1131.3 1776.4 1131.7 C1776.9 1132.0 1777.9 1129.8 1778.4 1128.9 C1779.1 1127.9 1779.9 1126.4 1780.4 1125.3 C1781.0 1124.0 1781.6 1122.1 1782.1 1120.7 C1782.2 1120.5 1782.2 1120.2 1782.4 1120.1 C1782.9 1119.9 1784.1 1119.4 1784.4 1119.7 C1785.3 1120.7 1785.8 1123.2 1786.4 1124.7 C1787.0 1126.3 1787.6 1128.4 1788.4 1129.9 C1788.8 1130.7 1789.7 1131.9 1790.4 1132.2 C1790.9 1132.4 1791.8 1131.4 1792.4 1131.3 C1793.0 1131.3 1793.9 1132.1 1794.4 1131.8 C1795.1 1131.4 1795.8 1129.0 1796.4 1129.1 C1797.0 1129.1 1797.9 1132.1 1798.4 1132.0 C1799.1 1131.9 1799.7 1128.4 1800.4 1128.3 C1800.9 1128.2 1801.8 1131.1 1802.4 1131.2 C1803.0 1131.3 1803.7 1129.5 1804.4 1128.9 C1804.9 1128.4 1805.9 1128.2 1806.4 1127.8 C1807.1 1127.3 1807.7 1126.3 1808.4 1125.8 C1808.6 1125.7 1809.0 1125.6 1809.3 1125.6 C1809.6 1125.6 1810.1 1125.8 1810.4 1126.0 C1811.1 1126.5 1811.8 1127.4 1812.4 1128.0 C1813.0 1128.6 1813.8 1129.5 1814.4 1130.1 C1815.0 1130.6 1815.8 1131.3 1816.4 1131.8 C1817.0 1132.3 1817.8 1133.4 1818.4 1133.4 C1819.0 1133.4 1819.8 1131.8 1820.4 1131.9 C1821.0 1131.9 1821.7 1133.4 1822.4 1133.6 C1822.9 1133.7 1823.9 1132.6 1824.4 1132.8 C1825.1 1133.1 1825.9 1134.4 1826.4 1135.2 C1827.1 1136.4 1827.7 1138.4 1828.4 1139.5 C1828.5 1139.7 1829.0 1139.6 1829.3 1139.6 C1829.6 1139.6 1830.1 1139.6 1830.4 1139.6 C1831.0 1139.6 1831.9 1139.8 1832.4 1139.6 C1833.1 1139.3 1833.8 1138.2 1834.4 1138.2 C1835.0 1138.2 1835.8 1139.3 1836.4 1139.5 C1837.0 1139.6 1837.9 1139.6 1838.4 1139.4 C1839.1 1139.1 1839.8 1138.3 1840.4 1137.9 C1841.0 1137.6 1841.8 1136.9 1842.4 1136.8 C1843.0 1136.8 1843.8 1137.4 1844.4 1137.7 C1845.0 1138.1 1845.7 1138.8 1846.4 1139.0 C1846.9 1139.2 1848.0 1139.3 1848.4 1138.9 C1849.2 1138.2 1849.8 1135.6 1850.4 1135.6 C1851.0 1135.6 1851.8 1138.7 1852.4 1138.6 C1853.0 1138.6 1853.7 1136.2 1854.4 1135.3 C1854.9 1134.6 1855.7 1133.9 1856.4 1133.4 C1856.9 1132.9 1857.9 1132.6 1858.4 1132.1 C1859.1 1131.4 1859.8 1130.2 1860.4 1129.4 C1860.5 1129.3 1860.7 1129.3 1860.8 1129.3 C1861.3 1129.7 1862.0 1130.2 1862.4 1130.7 C1863.1 1131.7 1863.6 1133.6 1864.4 1134.4 C1864.8 1134.8 1866.0 1134.2 1866.4 1134.5 C1867.2 1135.2 1867.6 1137.2 1868.4 1137.9 C1868.8 1138.2 1869.8 1137.9 1870.4 1137.9 C1871.0 1137.8 1871.8 1137.5 1872.4 1137.5 C1872.8 1137.5 1873.5 1137.8 1873.7 1137.6 C1874.1 1137.1 1874.0 1135.2 1874.4 1135.2 C1874.8 1135.2 1876.0 1137.6 1876.4 1137.3 C1877.2 1136.8 1877.8 1132.5 1878.4 1132.4 C1879.0 1132.4 1879.7 1136.8 1880.4 1137.0 C1880.9 1137.2 1881.8 1134.0 1882.4 1133.9 C1883.0 1133.9 1883.8 1136.7 1884.4 1136.7 C1885.0 1136.6 1885.6 1134.2 1886.4 1133.5 C1886.8 1133.1 1887.8 1133.2 1888.4 1133.0 C1888.7 1132.9 1889.2 1132.6 1889.4 1132.4 C1889.8 1132.0 1890.0 1131.2 1890.4 1130.9 C1890.9 1130.3 1891.8 1129.3 1892.4 1129.3 C1893.0 1129.4 1893.9 1130.7 1894.4 1131.4 C1895.1 1132.5 1895.6 1134.3 1896.4 1135.2 C1896.8 1135.8 1897.9 1136.0 1898.4 1136.5 C1899.1 1137.1 1899.8 1138.7 1900.4 1138.8 C1901.0 1138.9 1902.0 1136.9 1902.4 1137.1 C1903.0 1137.4 1903.4 1140.5 1903.7 1140.4 C1904.0 1140.3 1903.9 1137.2 1904.4 1136.2 C1904.7 1135.8 1906.1 1135.2 1906.4 1135.6 C1907.3 1136.8 1907.7 1141.2 1908.4 1141.6 C1908.9 1141.9 1909.8 1138.0 1910.4 1138.1 C1911.0 1138.2 1911.6 1141.3 1912.4 1142.3 C1912.8 1142.6 1914.1 1142.8 1914.4 1142.4 C1915.3 1141.3 1915.8 1137.2 1916.4 1137.2 C1917.0 1137.2 1917.8 1142.3 1918.4 1142.4 C1919.0 1142.4 1919.8 1137.5 1920.4 1137.5 C1921.0 1137.4 1921.5 1141.2 1922.4 1142.2 C1922.7 1142.6 1923.8 1142.1 1924.4 1142.1 C1925.0 1142.0 1925.8 1142.1 1926.4 1141.9 C1927.0 1141.8 1927.9 1141.5 1928.4 1141.2 C1929.1 1140.6 1929.7 1139.2 1930.4 1139.0 C1930.9 1138.8 1932.0 1140.0 1932.4 1139.7 C1933.2 1139.1 1933.9 1137.0 1934.4 1135.8 C1935.1 1134.2 1935.6 1131.9 1936.4 1130.4 C1936.8 1129.7 1937.9 1128.3 1938.4 1128.5 C1939.1 1128.8 1939.8 1131.0 1940.4 1132.1 C1940.6 1132.4 1940.7 1133.0 1940.9 1133.4 C1941.3 1134.5 1941.7 1136.2 1942.4 1137.1 C1942.8 1137.7 1943.8 1138.4 1944.4 1138.5 C1945.0 1138.6 1945.9 1137.8 1946.4 1137.9 C1947.1 1138.1 1947.9 1139.6 1948.4 1139.5 C1949.1 1139.3 1949.9 1136.8 1950.4 1137.0 C1951.1 1137.3 1951.6 1140.2 1952.4 1141.0 C1952.8 1141.4 1953.9 1141.2 1954.4 1141.0 C1955.1 1140.7 1955.8 1139.2 1956.4 1139.2 C1957.0 1139.2 1957.7 1140.7 1958.4 1141.0 C1958.9 1141.2 1959.8 1141.1 1960.4 1140.9 C1961.0 1140.8 1961.9 1140.4 1962.4 1140.0 C1963.1 1139.2 1963.8 1137.9 1964.4 1137.1 C1965.0 1136.3 1965.9 1135.5 1966.4 1134.7 C1967.0 1133.6 1967.6 1131.9 1968.1 1130.8 C1968.2 1130.6 1968.2 1130.3 1968.4 1130.3 C1968.9 1130.0 1970.0 1129.5 1970.4 1129.9 C1971.2 1130.6 1971.8 1132.8 1972.4 1134.0 C1973.0 1135.0 1973.8 1136.4 1974.4 1137.4 C1975.0 1138.4 1975.6 1140.1 1976.4 1140.6 C1976.8 1140.9 1977.9 1139.9 1978.4 1140.1 C1979.1 1140.3 1979.7 1141.6 1980.4 1141.8 C1980.9 1141.9 1981.8 1141.0 1982.4 1141.1 C1983.0 1141.2 1983.7 1142.3 1984.4 1142.6 C1984.9 1142.9 1985.8 1143.1 1986.4 1143.0 C1987.0 1142.9 1988.0 1142.4 1988.4 1141.8 C1989.0 1141.1 1989.4 1138.5 1989.6 1138.8 C1990.0 1139.2 1990.0 1143.8 1990.4 1143.9 C1990.8 1144.0 1991.8 1139.7 1992.4 1139.6 C1993.0 1139.5 1993.8 1143.2 1994.4 1143.1 C1995.0 1143.1 1995.9 1139.1 1996.4 1139.4 C1997.1 1139.7 1997.7 1144.9 1998.4 1145.1 C1998.9 1145.3 1999.6 1141.4 2000.4 1140.6 C2000.8 1140.2 2002.0 1140.7 2002.4 1141.1 C2003.2 1142.0 2003.9 1145.2 2004.4 1145.0 C2005.1 1144.6 2005.8 1139.3 2006.4 1139.2 C2007.0 1139.1 2007.5 1143.3 2008.4 1144.3 C2008.7 1144.7 2009.8 1143.9 2010.4 1143.8 C2011.0 1143.6 2011.8 1143.4 2012.4 1143.3 C2013.0 1143.1 2013.8 1142.8 2014.4 1142.7 C2015.0 1142.5 2015.9 1142.4 2016.4 1142.1 C2017.1 1141.6 2017.8 1140.1 2018.4 1139.9 C2018.8 1139.8 2019.5 1141.5 2019.6 1141.2 C2020.1 1140.2 2020.0 1135.9 2020.4 1135.8 C2020.8 1135.6 2021.7 1140.2 2022.4 1140.4 C2022.9 1140.5 2023.7 1137.8 2024.4 1136.8 C2024.9 1136.0 2026.0 1133.9 2026.4 1134.3 C2027.2 1134.8 2027.8 1139.4 2028.4 1139.5 C2029.0 1139.6 2029.8 1134.9 2030.4 1134.9 C2031.0 1134.9 2031.8 1138.0 2032.4 1139.4 C2032.4 1139.5 2032.4 1139.7 2032.5 1139.7 C2033.0 1138.9 2033.8 1136.7 2034.4 1136.7 C2035.0 1136.8 2035.6 1139.3 2036.4 1140.0 C2036.8 1140.4 2037.8 1140.2 2038.4 1140.2 C2039.0 1140.3 2039.8 1140.6 2040.4 1140.5 C2041.0 1140.4 2041.8 1139.5 2042.4 1139.6 C2043.0 1139.7 2044.0 1141.4 2044.4 1141.1 C2045.2 1140.5 2045.8 1137.6 2046.4 1136.6 C2046.5 1136.4 2046.7 1136.9 2046.8 1137.1 C2047.3 1138.4 2047.9 1141.6 2048.4 1141.6 C2048.9 1141.6 2049.8 1137.1 2050.4 1137.2 C2051.0 1137.3 2051.5 1141.0 2052.4 1142.1 C2052.7 1142.5 2053.8 1142.2 2054.4 1142.3 C2055.0 1142.3 2056.0 1142.7 2056.4 1142.4 C2057.2 1141.6 2057.7 1138.8 2058.4 1138.5 C2058.9 1138.3 2059.9 1140.8 2060.4 1140.6 C2061.1 1140.5 2061.6 1138.3 2062.4 1137.6 C2062.8 1137.3 2064.1 1136.8 2064.4 1137.2 C2065.3 1138.1 2065.8 1142.0 2066.4 1142.0 C2067.0 1142.0 2067.8 1137.2 2068.4 1137.2 C2069.0 1137.1 2069.8 1141.7 2070.4 1141.6 C2071.0 1141.6 2071.6 1137.5 2072.4 1137.0 C2072.8 1136.7 2073.8 1138.5 2074.4 1139.1 C2075.0 1139.7 2075.7 1140.8 2076.4 1141.2 C2076.9 1141.4 2077.8 1141.1 2078.4 1141.1" fill="none" stroke="#1aab3a" stroke-width="2"/><path d="M1420.4 1135.9 C1421.0 1135.7 1421.8 1135.4 1422.4 1135.1 C1423.0 1134.8 1424.0 1134.5 1424.4 1134.0 C1425.2 1133.1 1425.7 1131.4 1426.4 1130.5 C1426.9 1130.0 1427.8 1129.5 1428.4 1129.1 C1428.5 1129.0 1428.6 1129.0 1428.6 1128.9 C1429.2 1127.8 1429.7 1126.2 1430.4 1125.2 C1430.8 1124.6 1431.9 1124.2 1432.4 1123.7 C1433.1 1123.0 1433.8 1121.8 1434.4 1121.1 C1435.0 1120.4 1435.7 1119.4 1436.4 1118.9 C1436.9 1118.5 1437.8 1118.2 1438.4 1118.1 C1439.0 1118.0 1439.8 1118.1 1440.4 1118.1 C1441.0 1118.2 1441.9 1118.1 1442.4 1118.4 C1443.1 1118.8 1443.8 1119.7 1444.4 1120.3 C1445.0 1121.0 1445.7 1122.1 1446.4 1122.8 C1446.9 1123.3 1447.7 1124.0 1448.4 1124.3 C1448.9 1124.6 1450.0 1124.6 1450.4 1125.0 C1451.2 1125.7 1451.7 1127.5 1452.4 1128.0 C1452.7 1128.2 1453.2 1127.2 1453.5 1127.3 C1453.8 1127.3 1454.1 1128.1 1454.4 1128.4 C1455.0 1128.9 1455.8 1129.9 1456.4 1130.0 C1457.0 1130.1 1457.9 1128.9 1458.4 1129.0 C1459.1 1129.1 1459.7 1130.4 1460.4 1130.9 C1460.9 1131.3 1461.8 1131.6 1462.4 1132.0 C1463.0 1132.4 1463.8 1133.1 1464.4 1133.4 C1464.8 1133.6 1465.5 1133.5 1465.8 1133.7 C1466.1 1133.9 1466.1 1134.8 1466.4 1135.0 C1466.9 1135.3 1467.9 1135.1 1468.4 1135.5 C1469.1 1136.0 1469.7 1137.4 1470.4 1137.9 C1470.9 1138.2 1471.8 1137.9 1472.4 1138.0 C1473.0 1138.3 1473.8 1139.1 1474.4 1139.2 C1475.0 1139.3 1475.8 1138.9 1476.4 1138.8 C1476.8 1138.8 1477.5 1139.2 1477.8 1139.0 C1478.1 1138.9 1478.1 1138.1 1478.4 1137.9 C1478.9 1137.4 1479.8 1136.9 1480.4 1136.6 C1481.0 1136.3 1481.8 1136.2 1482.4 1136.0 C1483.0 1135.8 1483.8 1135.2 1484.4 1135.1 C1485.0 1135.1 1485.8 1135.7 1486.4 1135.6 C1487.0 1135.6 1487.8 1135.2 1488.4 1134.9 C1489.0 1134.5 1489.8 1133.6 1490.4 1133.5 C1491.0 1133.4 1491.9 1134.2 1492.4 1134.1 C1492.7 1134.0 1492.7 1133.0 1493.0 1132.8 C1493.3 1132.6 1494.0 1132.9 1494.4 1132.9 C1495.0 1132.9 1495.8 1132.7 1496.4 1132.8 C1497.0 1132.8 1497.8 1133.1 1498.4 1133.3 C1499.0 1133.6 1499.8 1134.0 1500.4 1134.3 C1501.0 1134.6 1501.8 1135.0 1502.4 1135.3 C1503.0 1135.5 1503.8 1135.7 1504.4 1135.7 C1505.0 1135.7 1505.8 1135.4 1506.4 1135.3 C1507.0 1135.3 1507.8 1135.1 1508.4 1135.2 C1509.0 1135.4 1509.8 1135.7 1510.4 1136.0 C1511.0 1136.4 1511.8 1137.5 1512.4 1137.6 C1513.0 1137.6 1513.8 1136.6 1514.4 1136.4 C1515.0 1136.3 1515.8 1136.5 1516.4 1136.7 C1517.0 1136.9 1517.8 1137.5 1518.4 1137.7 C1519.0 1137.9 1519.8 1137.8 1520.4 1137.9 C1521.0 1138.0 1521.8 1138.2 1522.4 1138.3 C1523.0 1138.4 1523.8 1138.6 1524.4 1138.8 C1525.0 1139.0 1525.8 1139.4 1526.4 1139.6 C1527.0 1139.9 1527.8 1140.3 1528.4 1140.6 C1528.6 1140.7 1528.6 1141.0 1528.8 1141.1 C1529.2 1141.3 1529.9 1141.6 1530.4 1141.6 C1531.0 1141.6 1531.9 1141.2 1532.4 1141.3 C1533.1 1141.5 1533.7 1142.4 1534.4 1142.6 C1534.9 1142.8 1535.8 1142.6 1536.4 1142.5 C1537.0 1142.4 1537.8 1142.0 1538.4 1142.0 C1539.0 1142.0 1539.8 1142.5 1540.4 1142.6 C1541.0 1142.7 1541.8 1142.6 1542.4 1142.7 C1543.0 1142.8 1543.9 1143.4 1544.4 1143.3 C1544.6 1143.3 1544.3 1142.7 1544.5 1142.6 C1544.9 1142.3 1545.8 1142.3 1546.4 1142.3 C1547.0 1142.3 1547.9 1142.3 1548.4 1142.5 C1549.1 1142.8 1549.8 1144.0 1550.4 1144.1 C1551.0 1144.1 1551.8 1143.0 1552.4 1142.9 C1553.0 1142.9 1553.8 1143.6 1554.4 1143.8 C1555.0 1144.0 1555.8 1144.2 1556.4 1144.2 C1556.6 1144.2 1556.7 1143.8 1556.8 1143.8 C1557.3 1144.0 1557.9 1144.8 1558.4 1145.0 C1558.9 1145.2 1559.8 1145.1 1560.4 1145.1 C1561.0 1145.1 1561.8 1144.9 1562.4 1144.8 C1563.0 1144.6 1563.9 1143.9 1564.4 1144.0 C1565.1 1144.2 1565.7 1145.8 1566.4 1145.9 C1566.9 1146.0 1567.8 1145.0 1568.4 1144.7 C1569.0 1144.6 1569.8 1144.6 1570.4 1144.6 C1570.8 1144.7 1571.3 1145.1 1571.7 1145.3 C1571.9 1145.4 1572.2 1145.7 1572.4 1145.7 C1573.0 1145.5 1573.8 1144.9 1574.4 1144.7 C1575.0 1144.5 1575.8 1144.4 1576.4 1144.2 C1577.0 1144.0 1577.8 1143.5 1578.4 1143.4 C1579.0 1143.3 1579.9 1143.8 1580.4 1143.5 C1581.1 1143.2 1581.7 1142.0 1582.4 1141.6 C1582.9 1141.3 1583.9 1141.5 1584.4 1141.2 C1585.1 1140.9 1585.8 1140.1 1586.4 1139.7 C1587.0 1139.2 1587.8 1138.7 1588.4 1138.3 C1589.0 1137.9 1589.7 1137.2 1590.4 1137.0 C1590.9 1136.8 1591.8 1137.1 1592.4 1137.0 C1593.0 1136.9 1593.8 1136.6 1594.4 1136.3 C1595.0 1136.0 1595.7 1135.2 1596.4 1134.9 C1596.9 1134.7 1597.8 1134.9 1598.4 1134.8 C1599.0 1134.7 1599.8 1134.3 1600.4 1134.3 C1601.0 1134.3 1602.0 1135.0 1602.4 1134.8 C1602.8 1134.6 1602.8 1133.2 1603.2 1132.8 C1603.4 1132.6 1604.1 1133.1 1604.4 1132.9 C1605.1 1132.4 1605.9 1131.2 1606.4 1130.4 C1607.1 1129.5 1607.7 1128.1 1608.4 1127.2 C1608.9 1126.6 1610.0 1126.0 1610.4 1125.3 C1611.0 1124.4 1611.3 1122.9 1611.8 1121.9 C1611.9 1121.7 1612.2 1121.4 1612.4 1121.2 C1613.0 1120.7 1613.8 1120.0 1614.4 1119.6 C1615.0 1119.1 1615.7 1118.3 1616.4 1118.0 C1616.9 1117.7 1617.9 1117.3 1618.4 1117.4 C1618.7 1117.4 1618.7 1118.2 1618.9 1118.3 C1619.3 1118.6 1620.0 1118.7 1620.4 1118.9 C1621.1 1119.4 1621.8 1120.3 1622.4 1120.8 C1622.6 1120.9 1623.0 1120.9 1623.2 1121.1 C1623.6 1121.4 1624.1 1122.0 1624.4 1122.4 C1625.0 1123.3 1625.8 1124.5 1626.4 1125.4 C1627.0 1126.1 1627.7 1127.2 1628.4 1127.9 C1628.9 1128.3 1629.8 1128.7 1630.4 1129.1 C1631.0 1129.6 1631.7 1130.4 1632.4 1130.9 C1632.9 1131.3 1633.8 1131.5 1634.4 1131.8 C1635.0 1132.0 1635.8 1132.2 1636.4 1132.4 C1637.0 1132.6 1637.8 1132.9 1638.4 1133.1 C1639.0 1133.2 1639.8 1133.3 1640.4 1133.4 C1641.0 1133.6 1641.8 1133.9 1642.4 1134.1 C1643.0 1134.4 1643.8 1134.6 1644.4 1134.8 C1645.0 1135.0 1645.9 1135.1 1646.4 1135.5 C1647.1 1135.9 1647.7 1137.0 1648.4 1137.5 C1648.9 1137.8 1649.8 1138.0 1650.4 1138.1 C1650.8 1138.2 1651.6 1137.9 1651.9 1138.0 C1652.2 1138.1 1652.1 1138.9 1652.4 1139.1 C1652.9 1139.3 1653.8 1139.3 1654.4 1139.3 C1655.0 1139.4 1655.8 1139.5 1656.4 1139.5 C1657.0 1139.5 1657.8 1139.4 1658.4 1139.4 C1659.0 1139.3 1659.8 1138.9 1660.4 1139.0 C1661.0 1139.1 1661.8 1140.2 1662.4 1140.2 C1663.0 1140.2 1663.8 1139.2 1664.4 1139.0 C1665.0 1138.9 1665.8 1139.1 1666.4 1139.1 C1667.0 1139.2 1667.8 1139.2 1668.4 1139.3 C1669.0 1139.4 1669.8 1139.7 1670.4 1139.8 C1671.0 1139.8 1671.9 1139.5 1672.4 1139.7 C1673.1 1140.0 1673.7 1140.9 1674.4 1141.2 C1674.9 1141.4 1675.9 1141.7 1676.4 1141.5 C1677.1 1141.3 1677.8 1140.1 1678.4 1140.0 C1679.0 1139.9 1679.8 1140.7 1680.4 1140.8 C1681.0 1140.9 1681.8 1140.5 1682.4 1140.6 C1683.0 1140.7 1683.8 1141.7 1684.4 1141.7 C1685.0 1141.8 1685.8 1141.0 1686.4 1141.0 C1686.8 1141.0 1687.3 1141.7 1687.6 1141.6 C1687.9 1141.5 1688.1 1140.1 1688.4 1140.1 C1688.9 1140.2 1689.8 1141.8 1690.4 1142.0 C1691.0 1142.0 1691.8 1140.9 1692.4 1140.8 C1693.0 1140.7 1693.8 1141.2 1694.4 1141.4 C1695.0 1141.7 1695.8 1142.4 1696.4 1142.6 C1697.0 1142.7 1697.8 1142.5 1698.4 1142.5 C1699.0 1142.5 1699.8 1142.3 1700.4 1142.3 C1701.0 1142.3 1701.8 1142.4 1702.4 1142.4 C1702.7 1142.3 1703.1 1141.9 1703.4 1142.0 C1703.7 1142.0 1704.1 1142.3 1704.4 1142.4 C1705.0 1142.6 1705.8 1142.7 1706.4 1142.8 C1707.0 1143.0 1707.8 1143.5 1708.4 1143.5 C1709.0 1143.5 1709.8 1142.8 1710.4 1142.7 C1711.0 1142.5 1711.8 1142.5 1712.4 1142.5 C1713.0 1142.6 1713.8 1142.7 1714.4 1142.8 C1714.5 1142.9 1714.7 1142.9 1714.8 1142.9 C1715.3 1143.0 1715.9 1143.4 1716.4 1143.4 C1717.0 1143.4 1717.8 1143.1 1718.4 1143.0 C1719.0 1142.8 1719.8 1142.3 1720.4 1142.3 C1721.0 1142.2 1721.8 1142.5 1722.4 1142.6 C1723.0 1142.7 1723.8 1143.0 1724.4 1142.9 C1725.0 1142.9 1725.8 1142.1 1726.4 1142.1 C1727.0 1142.2 1727.8 1143.1 1728.4 1143.1 C1729.0 1143.2 1729.8 1142.6 1730.4 1142.5 C1730.5 1142.5 1730.5 1142.6 1730.6 1142.6 C1731.1 1142.5 1731.9 1142.4 1732.4 1142.2 C1733.0 1142.1 1733.8 1141.8 1734.4 1141.5 C1735.0 1141.3 1735.8 1140.4 1736.4 1140.4 C1737.0 1140.5 1737.7 1141.7 1738.4 1142.0 C1738.9 1142.2 1739.8 1142.1 1740.4 1141.9 C1741.0 1141.8 1741.8 1141.3 1742.4 1141.1 C1743.0 1140.9 1743.8 1140.8 1744.4 1140.7 C1745.0 1140.6 1745.8 1140.6 1746.4 1140.3 C1747.0 1140.1 1747.9 1139.6 1748.4 1139.2 C1749.1 1138.7 1749.7 1137.7 1750.4 1137.2 C1750.9 1136.8 1751.8 1136.3 1752.4 1135.9 C1753.0 1135.5 1753.9 1135.1 1754.4 1134.7 C1755.1 1134.1 1755.7 1133.0 1756.4 1132.5 C1756.7 1132.3 1757.4 1132.4 1757.8 1132.3 C1758.0 1132.3 1758.2 1132.1 1758.4 1132.0 C1759.0 1131.6 1759.8 1131.0 1760.4 1130.8 C1761.0 1130.6 1761.8 1130.7 1762.4 1130.7 C1763.0 1130.7 1763.8 1130.9 1764.4 1130.9 C1765.0 1130.9 1765.8 1130.8 1766.4 1130.8 C1767.0 1130.9 1767.8 1131.2 1768.4 1131.3 C1768.6 1131.4 1769.0 1131.3 1769.2 1131.3 C1769.6 1131.3 1770.0 1131.1 1770.4 1131.2 C1771.0 1131.2 1771.8 1131.5 1772.4 1131.6 C1773.0 1131.7 1773.8 1131.9 1774.4 1132.0 C1775.0 1132.0 1775.8 1131.9 1776.4 1131.9 C1777.0 1131.8 1777.8 1131.6 1778.4 1131.8 C1779.0 1132.0 1779.8 1132.8 1780.4 1133.0 C1780.9 1133.1 1781.6 1132.9 1782.1 1132.8 C1782.2 1132.7 1782.3 1132.5 1782.4 1132.4 C1783.0 1132.3 1783.9 1131.9 1784.4 1132.1 C1785.1 1132.4 1785.7 1133.8 1786.4 1133.9 C1786.9 1134.1 1787.8 1133.3 1788.4 1133.2 C1789.0 1133.0 1789.8 1132.9 1790.4 1132.8 C1791.0 1132.7 1791.8 1132.4 1792.4 1132.4 C1793.0 1132.4 1793.8 1132.7 1794.4 1132.8 C1795.0 1132.8 1795.8 1132.6 1796.4 1132.6 C1797.0 1132.6 1797.9 1133.0 1798.4 1132.8 C1799.1 1132.6 1799.7 1131.7 1800.4 1131.5 C1800.9 1131.4 1801.8 1131.6 1802.4 1131.6 C1803.0 1131.6 1803.8 1131.5 1804.4 1131.5 C1805.0 1131.4 1805.9 1131.5 1806.4 1131.4 C1807.1 1131.1 1807.9 1130.0 1808.4 1130.1 C1808.8 1130.1 1808.9 1131.3 1809.3 1131.6 C1809.5 1131.7 1810.1 1131.7 1810.4 1131.5 C1811.0 1131.3 1811.8 1130.3 1812.4 1130.4 C1813.0 1130.5 1813.8 1131.5 1814.4 1131.9 C1815.0 1132.3 1815.8 1132.7 1816.4 1132.9 C1817.0 1133.0 1817.9 1132.8 1818.4 1133.1 C1819.1 1133.5 1819.8 1134.6 1820.4 1135.2 C1821.0 1135.8 1821.7 1136.8 1822.4 1137.2 C1822.9 1137.4 1823.9 1136.8 1824.4 1137.1 C1825.1 1137.4 1825.7 1138.6 1826.4 1139.0 C1826.9 1139.4 1827.9 1139.9 1828.4 1139.9 C1828.7 1139.8 1829.0 1138.9 1829.3 1138.9 C1829.6 1138.9 1830.0 1139.7 1830.4 1139.8 C1830.9 1140.0 1831.8 1139.9 1832.4 1139.8 C1833.0 1139.6 1833.8 1139.0 1834.4 1139.0 C1835.0 1138.9 1835.8 1139.4 1836.4 1139.3 C1837.0 1139.3 1837.8 1138.7 1838.4 1138.7 C1839.0 1138.7 1839.8 1139.3 1840.4 1139.3 C1841.0 1139.2 1841.8 1138.2 1842.4 1138.3 C1843.0 1138.4 1843.7 1139.7 1844.4 1139.9 C1844.9 1140.1 1845.9 1140.0 1846.4 1139.8 C1847.1 1139.5 1847.8 1138.2 1848.4 1138.2 C1849.0 1138.1 1849.7 1139.3 1850.4 1139.5 C1850.9 1139.6 1851.8 1139.4 1852.4 1139.2 C1853.0 1139.1 1853.8 1138.7 1854.4 1138.7 C1855.0 1138.6 1855.8 1139.0 1856.4 1139.0 C1857.0 1139.0 1857.8 1138.8 1858.4 1138.7 C1859.0 1138.6 1859.8 1138.4 1860.4 1138.2 C1860.5 1138.2 1860.7 1138.0 1860.8 1138.0 C1861.3 1137.9 1861.9 1138.0 1862.4 1138.0 C1863.0 1137.9 1863.8 1137.6 1864.4 1137.6 C1865.0 1137.6 1865.8 1137.8 1866.4 1137.9 C1867.0 1138.0 1867.8 1138.4 1868.4 1138.2 C1869.0 1138.1 1869.8 1137.0 1870.4 1137.0 C1871.0 1137.0 1871.9 1138.3 1872.4 1138.3 C1872.9 1138.2 1873.4 1136.7 1873.7 1136.7 C1874.0 1136.7 1874.0 1138.1 1874.4 1138.2 C1874.8 1138.4 1875.8 1138.1 1876.4 1137.9 C1877.0 1137.7 1877.8 1137.0 1878.4 1137.0 C1879.0 1137.0 1879.8 1137.7 1880.4 1137.8 C1881.0 1137.8 1881.8 1137.5 1882.4 1137.4 C1883.0 1137.3 1883.8 1137.3 1884.4 1137.3 C1885.0 1137.3 1885.8 1137.5 1886.4 1137.4 C1887.0 1137.3 1887.8 1136.8 1888.4 1136.8 C1888.7 1136.8 1889.1 1137.3 1889.4 1137.4 C1889.7 1137.5 1890.1 1137.4 1890.4 1137.4 C1891.0 1137.4 1891.8 1137.5 1892.4 1137.4 C1893.0 1137.4 1893.8 1136.9 1894.4 1137.0 C1895.0 1137.1 1895.8 1138.1 1896.4 1138.3 C1897.0 1138.4 1897.9 1137.7 1898.4 1138.0 C1899.1 1138.4 1899.7 1140.1 1900.4 1140.4 C1900.9 1140.6 1901.9 1139.4 1902.4 1139.5 C1902.9 1139.6 1903.3 1140.7 1903.7 1141.1 C1903.9 1141.2 1904.2 1141.1 1904.4 1141.1 C1905.0 1141.0 1905.8 1140.8 1906.4 1140.9 C1907.0 1141.0 1907.8 1141.3 1908.4 1141.5 C1909.0 1141.9 1909.8 1142.9 1910.4 1142.9 C1911.0 1142.9 1911.8 1141.8 1912.4 1141.7 C1913.0 1141.5 1913.8 1141.9 1914.4 1142.0 C1915.0 1142.1 1915.8 1142.5 1916.4 1142.5 C1917.0 1142.4 1917.8 1141.7 1918.4 1141.7 C1919.0 1141.7 1919.8 1142.4 1920.4 1142.4 C1921.0 1142.4 1921.8 1141.6 1922.4 1141.6 C1923.0 1141.5 1923.8 1141.9 1924.4 1142.0 C1925.0 1142.1 1925.8 1142.3 1926.4 1142.3 C1927.0 1142.3 1927.8 1142.2 1928.4 1142.1 C1929.0 1142.1 1929.8 1142.0 1930.4 1141.9 C1931.0 1141.8 1931.8 1141.9 1932.4 1141.7 C1933.0 1141.5 1933.8 1140.8 1934.4 1140.7 C1935.0 1140.7 1935.8 1141.4 1936.4 1141.5 C1937.0 1141.5 1937.8 1141.2 1938.4 1141.0 C1939.0 1140.8 1939.9 1140.2 1940.4 1140.1 C1940.6 1140.1 1940.7 1140.7 1940.9 1140.8 C1941.3 1141.0 1942.0 1140.9 1942.4 1140.9 C1943.0 1141.0 1943.8 1141.1 1944.4 1141.2 C1945.0 1141.3 1945.9 1141.7 1946.4 1141.6 C1947.1 1141.4 1947.8 1140.2 1948.4 1140.2 C1949.0 1140.1 1949.8 1141.1 1950.4 1141.3 C1951.0 1141.5 1951.8 1141.8 1952.4 1141.7 C1953.0 1141.6 1953.8 1140.8 1954.4 1140.6 C1955.0 1140.4 1955.8 1140.2 1956.4 1140.4 C1957.0 1140.5 1957.8 1141.4 1958.4 1141.5 C1959.0 1141.6 1959.8 1141.2 1960.4 1141.2 C1961.0 1141.1 1961.8 1141.2 1962.4 1141.1 C1963.0 1141.0 1963.8 1140.5 1964.4 1140.5 C1965.0 1140.5 1965.8 1141.2 1966.4 1141.3 C1966.9 1141.4 1967.7 1141.4 1968.1 1141.2 C1968.3 1141.1 1968.2 1140.4 1968.4 1140.5 C1968.9 1140.6 1969.8 1141.9 1970.4 1141.9 C1971.0 1141.9 1971.8 1140.9 1972.4 1140.7 C1973.0 1140.6 1973.8 1141.0 1974.4 1141.0 C1975.0 1141.1 1975.8 1141.1 1976.4 1141.0 C1977.0 1141.0 1977.8 1140.6 1978.4 1140.7 C1979.0 1140.8 1979.8 1141.7 1980.4 1141.8 C1981.0 1141.9 1981.8 1141.2 1982.4 1141.3 C1983.0 1141.3 1983.8 1141.7 1984.4 1142.0 C1985.0 1142.2 1985.8 1142.5 1986.4 1142.8 C1987.0 1143.1 1987.8 1143.7 1988.4 1143.9 C1988.7 1144.1 1989.2 1144.0 1989.6 1144.0 C1989.8 1144.0 1990.2 1143.9 1990.4 1144.0 C1991.0 1144.2 1991.8 1144.9 1992.4 1145.0 C1993.0 1145.0 1993.8 1144.6 1994.4 1144.5 C1995.0 1144.4 1995.8 1144.1 1996.4 1144.1 C1997.0 1144.2 1997.8 1144.7 1998.4 1144.9 C1999.0 1145.1 1999.8 1145.6 2000.4 1145.6 C2001.0 1145.6 2001.8 1145.1 2002.4 1145.0 C2003.0 1144.9 2003.8 1144.9 2004.4 1144.9 C2005.0 1144.9 2005.8 1145.4 2006.4 1145.3 C2007.0 1145.1 2007.8 1144.3 2008.4 1144.0 C2009.0 1143.7 2009.8 1143.5 2010.4 1143.3 C2011.0 1143.2 2011.8 1142.8 2012.4 1142.7 C2013.0 1142.6 2013.8 1142.8 2014.4 1142.7 C2015.0 1142.6 2015.8 1142.1 2016.4 1142.0 C2017.0 1141.8 2017.9 1142.1 2018.4 1142.0 C2018.8 1141.8 2019.2 1141.0 2019.6 1140.9 C2019.8 1140.9 2020.1 1141.7 2020.4 1141.6 C2021.0 1141.6 2021.8 1140.8 2022.4 1140.6 C2023.0 1140.3 2023.8 1139.9 2024.4 1139.7 C2025.0 1139.6 2025.8 1139.9 2026.4 1139.8 C2027.0 1139.7 2027.8 1139.0 2028.4 1139.0 C2029.0 1138.9 2029.8 1139.4 2030.4 1139.5 C2031.0 1139.6 2031.9 1139.5 2032.4 1139.6 C2032.5 1139.7 2032.4 1140.0 2032.5 1140.0 C2033.0 1139.9 2033.8 1139.1 2034.4 1139.1 C2035.0 1139.0 2035.9 1139.3 2036.4 1139.5 C2037.1 1139.8 2037.7 1140.9 2038.4 1141.0 C2038.9 1141.2 2039.8 1140.6 2040.4 1140.5 C2041.0 1140.4 2041.8 1140.3 2042.4 1140.4 C2043.0 1140.6 2043.8 1141.2 2044.4 1141.4 C2045.0 1141.7 2045.9 1142.2 2046.4 1142.2 C2046.6 1142.1 2046.6 1141.2 2046.8 1141.1 C2047.2 1140.9 2047.9 1141.0 2048.4 1141.1 C2049.0 1141.2 2049.8 1141.7 2050.4 1141.8 C2051.0 1141.8 2051.8 1141.6 2052.4 1141.5 C2053.0 1141.5 2053.9 1141.3 2054.4 1141.4 C2055.1 1141.6 2055.8 1142.7 2056.4 1142.7 C2057.0 1142.8 2057.8 1141.7 2058.4 1141.7 C2059.0 1141.6 2059.8 1142.4 2060.4 1142.6 C2061.0 1142.8 2061.8 1143.2 2062.4 1143.2 C2063.0 1143.1 2063.8 1142.3 2064.4 1142.2 C2065.0 1142.0 2065.8 1142.2 2066.4 1142.0 C2067.0 1141.9 2067.8 1141.2 2068.4 1141.0 C2069.0 1140.9 2069.8 1140.9 2070.4 1141.0 C2071.0 1141.2 2071.8 1141.9 2072.4 1142.1 C2073.0 1142.2 2073.9 1142.1 2074.4 1141.9 C2075.1 1141.6 2075.7 1140.6 2076.4 1140.4 C2076.9 1140.3 2077.8 1140.6 2078.4 1140.6" fill="none" stroke="#8e3ce6" stroke-width="2"/></g><path d="M1412 1117.5 H2078" stroke="#777" stroke-dasharray="4 3"/><path d="M1572.5 980 V1148" stroke="#999" stroke-dasharray="4 3"/><circle cx="1572.5" cy="1127" r="3" fill="#3399e6"/></svg>
<div class="a" style="left:1364px;top:1106px;width:45px;height:22px;background:#666;border-radius:3px;color:#fff;font-size:13px;line-height:22px;text-align:center">0.332</div>
<div class="a" style="left:1506px;top:1151px;width:132px;height:22px;background:#666;border-radius:3px;color:#fff;font-size:13px;line-height:22px;text-align:center">2025-01-13 03:20:00</div>
<div class="a" style="left:1593px;top:752px;width:400px;height:344px;background:rgba(255,255,255,0.96);border-radius:4px;box-shadow:0 1px 10px rgba(0,0,0,0.16);overflow:hidden">
  <div class="a" style="left:0;top:0;width:400px;height:39px;background:#f7f7f7"></div>
  <div class="a" style="left:20px;top:163px;width:360px;height:1px;background:#eee"></div>
  <div class="a" style="left:20px;top:173px;width:360px;height:26px;background:#f0f4fa"></div>
<div class="a" style="left:20px;top:224px;width:360px;height:1px;background:#eee"></div><div class="a" style="left:20px;top:249px;width:360px;height:1px;background:#eee"></div><div class="a" style="left:20px;top:274px;width:360px;height:1px;background:#eee"></div><div class="a" style="left:20px;top:299px;width:360px;height:1px;background:#eee"></div><div class="a" style="left:20px;top:324px;width:360px;height:1px;background:#eee"></div></div>
<svg style="left:1611px;top:763px" width="14" height="14" viewBox="0 0 14 14"><circle cx="7" cy="7" r="6" fill="none" stroke="#555" stroke-width="1.3"/><circle cx="7" cy="7" r="1.8" fill="#555"/></svg>
<div class="t" style="left:1633px;top:763px;font-size:14px;color:#333">日期：2025-01-13 03:20:00</div>
<div class="a" style="left:1614px;top:816px;width:12px;height:12px;border-radius:50%;background:#ff8a00"></div>
<div class="t" style="left:1631px;top:815px;font-size:14px;color:#333">资源使用率：5.25%</div>
<div class="a" style="left:1614px;top:842px;width:12px;height:12px;border-radius:50%;background:#1e8ff5"></div>
<div class="t" style="left:1631px;top:841px;font-size:14px;color:#333">1分钟：0.21%</div>
<div class="a" style="left:1614px;top:868px;width:12px;height:12px;border-radius:50%;background:#14a833"></div>
<div class="t" style="left:1631px;top:867px;font-size:14px;color:#333">5分钟：0.07%</div>
<div class="a" style="left:1614px;top:894px;width:12px;height:12px;border-radius:50%;background:#8a2be2"></div>
<div class="t" style="left:1631px;top:893px;font-size:14px;color:#333">15分钟：0.03%</div>
<div class="t" style="left:1618px;top:932px;font-size:13px;color:#333;font-weight:bold">PID</div>
<div class="t" style="left:1708px;top:932px;font-size:13px;color:#333;font-weight:bold">进程名</div>
<div class="t" style="left:1798px;top:932px;font-size:13px;color:#333;font-weight:bold">CPU占用</div>
<div class="t" style="left:1888px;top:932px;font-size:13px;color:#333;font-weight:bold">启动用户</div>
<div class="t" style="left:1618px;top:957px;font-size:13px;color:#333">1712632</div><div class="t" style="left:1708px;top:957px;font-size:13px;color:#333">netdata</div><div class="t" style="left:1798px;top:957px;font-size:13px;color:#333">1.06%</div><div class="t" style="left:1888px;top:957px;font-size:13px;color:#333">root</div>
<div class="t" style="left:1618px;top:982px;font-size:13px;color:#333">1713005</div><div class="t" style="left:1708px;top:982px;font-size:13px;color:#333">apps.plugin</div><div class="t" style="left:1798px;top:982px;font-size:13px;color:#333">0.81%</div><div class="t" style="left:1888px;top:982px;font-size:13px;color:#333">root</div>
<div class="t" style="left:1618px;top:1007px;font-size:13px;color:#333">1</div><div class="t" style="left:1708px;top:1007px;font-size:13px;color:#333">systemd</div><div class="t" style="left:1798px;top:1007px;font-size:13px;color:#333">0.65%</div><div class="t" style="left:1888px;top:1007px;font-size:13px;color:#333">root</div>
<div class="t" style="left:1618px;top:1032px;font-size:13px;color:#333">1712451</div><div class="t" style="left:1708px;top:1032px;font-size:13px;color:#333">dockerd</div><div class="t" style="left:1798px;top:1032px;font-size:13px;color:#333">0.51%</div><div class="t" style="left:1888px;top:1032px;font-size:13px;color:#333">root</div>
<div class="t" style="left:1618px;top:1057px;font-size:13px;color:#333">3039677</div><div class="t" style="left:1708px;top:1057px;font-size:13px;color:#333">cron</div><div class="t" style="left:1798px;top:1057px;font-size:13px;color:#333">0.23%</div><div class="t" style="left:1888px;top:1057px;font-size:13px;color:#333">root</div>
<div class="a" style="left:2341px;top:1171px;width:40px;height:150px;background:#fff;border-radius:5px;box-shadow:0 0 6px rgba(0,0,0,0.08)"></div>
<svg style="left:2351px;top:1186px" width="14" height="14" viewBox="0 0 14 14"><path d="M1 8 C1 3 3.5 0.5 7 0.5 C10.5 0.5 13 3 13 8" fill="#20a53a"/><circle cx="7" cy="8" r="4" fill="#fff"/><circle cx="7" cy="8.5" r="3" fill="#20a53a"/><path d="M3 11 C5 13.5 9 13.5 11 11" fill="none" stroke="#20a53a" stroke-width="1.2"/></svg>
<div class="t g" style="left:2352px;top:1206px;font-size:12px;line-height:13px;white-space:normal;width:13px">客<br>服</div>
<svg style="left:2352px;top:1262px" width="13" height="13" viewBox="0 0 13 13"><path d="M7 1 H1 V12 H12 V6" fill="none" stroke="#20a53a" stroke-width="1.1"/><path d="M5 8 L5.5 6 L11 0.8 L12.3 2 L7 7.5 Z" fill="none" stroke="#20a53a" stroke-width="1"/></svg>
<div class="t g" style="left:2352px;top:1281px;font-size:12px;line-height:13px;white-space:normal;width:13px">评<br>价</div>
<!-- TAMPER DIALOG -->
<div class="a" style="left:1218px;top:95px;width:1137px;height:652px;background:#fff;box-shadow:0 1px 12px rgba(0,0,0,0.18);border-radius:2px">
  <div class="a" style="left:0;top:0;width:1137px;height:44px;background:#f8f8f8;border-bottom:1px solid #eee"></div>
  <div class="a" style="left:0;top:44px;width:119px;height:608px;background:#f0f0f0"></div>
  <div class="a" style="left:0;top:44px;width:119px;height:45px;background:#fff"></div>
</div>
<svg style="left:1227px;top:103px" width="27" height="24" viewBox="0 0 27 24"><rect x="0.7" y="0.7" width="20.5" height="21" rx="1.5" fill="#fbfbfb" stroke="#aaa" stroke-width="1.3"/><path d="M1 4.5 H21" stroke="#aaa" stroke-width="1.3"/><path d="M2.5 2.7 H19.5" stroke="#bbb" stroke-width="1" stroke-dasharray="1.5 0.8"/><rect x="18.5" y="16.5" width="7.5" height="6.5" fill="none" stroke="#5cb85c" stroke-width="1.3"/><path d="M20 16.5 V14.5 C20 13 21 12.3 22.2 12.3 C23.4 12.3 24.5 13 24.5 14.5 V16.5" fill="none" stroke="#5cb85c" stroke-width="1.3"/><circle cx="22.2" cy="19.6" r="0.9" fill="#5cb85c"/></svg>
<div class="t" style="left:1258px;top:108px;font-size:15px;color:#333">堡塔企业级防篡改</div>
<div class="t g" style="left:2153px;top:111px;font-size:13px">需求反馈</div>
<div class="a" style="left:2228px;top:105px;width:98px;height:23px;background:#1c9be6;border:1px solid #1580c8;border-radius:2px"></div>
<div class="a" style="left:2229px;top:106px;width:23px;height:21px;background:#d8e8f4"></div>
<svg style="left:2230px;top:107px" width="21" height="19" viewBox="0 0 21 19"><circle cx="7" cy="6" r="4" fill="#c0633a"/><circle cx="7" cy="7" r="3" fill="#f5d3b0"/><path d="M1 18 C1 13 3.5 11 7 11 C10.5 11 13 13 13 18 Z" fill="#4aa3d8"/><circle cx="14" cy="6" r="4" fill="#a8552f"/><circle cx="14" cy="7" r="3" fill="#f5d3b0"/><path d="M8.5 18 C8.5 13 10.5 11 14 11 C17.5 11 20 13 20 18 Z" fill="#5bb85a"/></svg>
<div class="t" style="left:2256px;top:110px;font-size:13px;color:#fff">加入QQ群</div>
<div class="a" style="left:2330px;top:95px;width:25px;height:16px;overflow:hidden"><div class="a" style="left:12px;top:-17px;width:31px;height:31px;border-radius:50%;background:#777;border:2px solid #fff"></div><div class="a" style="left:20px;top:-3px;width:2px;height:9px;background:#fff;transform:rotate(45deg)"></div></div>
<!-- nav -->
<div class="t" style="left:1238px;top:155px;font-size:13px;color:#333">概览</div>
<div class="t" style="left:1238px;top:199px;font-size:13px;color:#333">保护列表</div>
<div class="t" style="left:1238px;top:243px;font-size:13px;color:#333">全局配置</div>
<div class="t" style="left:1238px;top:287px;font-size:13px;color:#333">进程白名单</div>
<div class="t" style="left:1238px;top:331px;font-size:13px;color:#333">告警设置</div>
<div class="t" style="left:1238px;top:375px;font-size:13px;color:#333">操作日志</div>
<!-- top row -->
<div class="t" style="left:1353px;top:172px;font-size:15px;color:#333">全局开关</div>
<div class="a" style="left:1426px;top:166px;width:44px;height:26px;border-radius:13px;background:#20a53a"></div>
<div class="a" style="left:1445px;top:168px;width:22px;height:22px;border-radius:50%;background:#fff;box-shadow:0 1px 2px rgba(0,0,0,.25)"></div>
<div class="a" style="left:2011px;top:164px;width:77px;height:33px;border:1px solid #ddd;border-radius:3px;background:#fff;color:#333;font-size:13px;line-height:31px;text-align:center">导入配置</div>
<div class="a" style="left:2093px;top:164px;width:76px;height:33px;border:1px solid #ddd;border-radius:3px;background:#fff;color:#333;font-size:13px;line-height:31px;text-align:center">导出配置</div>
<div class="a" style="left:2185px;top:164px;width:77px;height:33px;border:1px solid #20a53a;border-radius:3px;background:#fff;color:#20a53a;font-size:13px;line-height:31px;text-align:center">临时开关</div>
<div class="a" style="left:2266px;top:164px;width:77px;height:33px;border:1px solid #20a53a;border-radius:3px;background:#20a53a;color:#fff;font-size:13px;line-height:31px;text-align:center">模拟攻击</div>
<!-- stats -->
<div class="a" style="left:1354px;top:214px;width:988px;height:109px;background:#f5f6fa;border-radius:4px"></div>
<svg style="left:1451px;top:235px" width="51" height="62" viewBox="0 0 51 62"><path d="M25.5 2 C20 6.5 12 9.5 4.5 10.5 C3 10.7 2.5 11.5 2.5 13 V33 C2.5 46 13 54.5 25.5 60 C38 54.5 48.5 46 48.5 33 V13 C48.5 11.5 48 10.7 46.5 10.5 C39 9.5 31 6.5 25.5 2 Z" fill="none" stroke="#5cb85c" stroke-width="3.4" stroke-linejoin="round"/><path d="M17.5 21 L33.5 37 M33.5 21 L17.5 37" stroke="#5cb85c" stroke-width="4.2" stroke-linecap="round"/></svg>
<div class="t" style="left:1524px;top:246px;font-size:19px;color:#666">拦截次数</div>
<div class="t" style="left:1523px;top:274px;font-size:23px;color:#5cb85c">2065次</div>
<svg style="left:1752px;top:236px" width="51" height="62" viewBox="0 0 51 62"><path d="M25.5 2 C20 6.5 12 9.5 4.5 10.5 C3 10.7 2.5 11.5 2.5 13 V33 C2.5 46 13 54.5 25.5 60 C38 54.5 48.5 46 48.5 33 V13 C48.5 11.5 48 10.7 46.5 10.5 C39 9.5 31 6.5 25.5 2 Z" fill="none" stroke="#5b86b8" stroke-width="3.4" stroke-linejoin="round"/><path d="M14.5 30 L22.5 38 L36.5 23" fill="none" stroke="#5b86b8" stroke-width="4.4" stroke-linecap="round" stroke-linejoin="round"/></svg>
<div class="t" style="left:1825px;top:246px;font-size:19px;color:#666">保护天数</div>
<div class="t" style="left:1824px;top:274px;font-size:23px;color:#5b80b2">142天</div>
<div class="a" style="left:2049px;top:237px;width:1px;height:63px;background:#e3e5ea"></div>
<div class="t" style="left:2108px;top:244px;width:200px;text-align:center;font-size:19px;color:#666">告警次数</div>
<div class="t" style="left:2108px;top:271px;width:200px;text-align:center;font-size:23px;color:#555">235</div>
<!-- types -->
<div class="a" style="left:1354px;top:341px;width:988px;height:395px;background:#f5f6fa;border-radius:4px"></div>
<div class="t" style="left:1370px;top:361px;font-size:16px;color:#333">拦截类型如下:</div>
<div class="a" style="left:1370px;top:506px;width:958px;height:1px;background:#e6e8ee"></div>
<div class="a" style="left:1370px;top:621px;width:958px;height:1px;background:#e6e8ee"></div>
<svg style="left:1394px;top:428px" width="38" height="29" viewBox="0 0 38 29"><path d="M2 0 H13 L16 4 H35 C36.5 4 38 5 38 7 V27 C38 28 37 29 35.5 29 H2.5 C1 29 0 28 0 26.5 V2 C0 1 1 0 2 0 Z" fill="#b9cae1"/><path d="M19 11 V22 M13.5 16.5 H24.5" stroke="#fff" stroke-width="3"/></svg>
<svg style="left:1392px;top:538px" width="42" height="35" viewBox="0 0 42 35"><path d="M3 0 H27 C30 0 32 2 32 5 V14 C27 14 23.5 18 23.5 23 C23.5 25 24 27 25 28 H3 C1.5 28 0 27 0 25 V3 C0 1 1.5 0 3 0 Z" fill="#b9cae1"/><path d="M5 18 V8 C5 6 6.5 5 8 5 H28" fill="none" stroke="#f5f6fa" stroke-width="2.6"/><circle cx="32" cy="25" r="9.5" fill="#b9cae1" stroke="#f5f6fa" stroke-width="1.8"/><path d="M28.5 21.5 L35.5 28.5 M35.5 21.5 L28.5 28.5" stroke="#f5f6fa" stroke-width="2.2"/></svg>
<svg style="left:1396px;top:656px" width="35" height="34" viewBox="0 0 35 34"><path d="M2 0 H28.5 C29.5 0 30 0.5 30 1.5 V13 L15 28 L12.5 33.5 H2 C1 33.5 0 32.5 0 31.5 V2 C0 1 1 0 2 0 Z" fill="#b9cae1"/><path d="M5 6 H21 M5 10 H23 M5 14 H15" stroke="#f5f6fa" stroke-width="2"/><path d="M17 31 L31 17 L34.5 20.5 L20.5 34.5 L15.5 34.5 Z" fill="#b9cae1"/></svg>
<div class="t" style="left:1431px;top:416px;width:200px;text-align:center;font-size:17px;color:#555">创建文件</div>
<div class="t" style="left:1431px;top:440px;width:200px;text-align:center;font-size:23px;color:#555">947</div>
<div class="t" style="left:1622px;top:416px;width:200px;text-align:center;font-size:17px;color:#555">新建文件夹</div>
<div class="t" style="left:1622px;top:440px;width:200px;text-align:center;font-size:23px;color:#555">104</div>
<div class="t" style="left:1684px;top:470px;font-size:12px;color:#555">今日新增</div>
<div class="a" style="left:1734px;top:467px;width:29px;height:18px;background:#fde8e8;border-radius:2px"></div>
<svg style="left:1740px;top:469px" width="6" height="13" viewBox="0 0 6 13"><path d="M3 12.5 V1.5 M0.8 4 L3 1 L5.2 4" fill="none" stroke="#e5483a" stroke-width="1.3"/></svg>
<div class="t" style="left:1751px;top:470px;font-size:12px;color:#e5483a">1</div>
<div class="t" style="left:1813px;top:416px;width:200px;text-align:center;font-size:17px;color:#555">创建软链</div>
<div class="t" style="left:1813px;top:440px;width:200px;text-align:center;font-size:23px;color:#555">15</div>
<div class="t" style="left:1431px;top:532px;width:200px;text-align:center;font-size:17px;color:#555">删除文件</div>
<div class="t" style="left:1431px;top:556px;width:200px;text-align:center;font-size:23px;color:#555">421</div>
<div class="t" style="left:1622px;top:532px;width:200px;text-align:center;font-size:17px;color:#555">删除文件夹</div>
<div class="t" style="left:1622px;top:556px;width:200px;text-align:center;font-size:23px;color:#555">75</div>
<div class="t" style="left:1431px;top:647px;width:200px;text-align:center;font-size:17px;color:#555">编辑文件</div>
<div class="t" style="left:1431px;top:671px;width:200px;text-align:center;font-size:23px;color:#555">122</div>
<div class="t" style="left:1622px;top:647px;width:200px;text-align:center;font-size:17px;color:#555">文件重命名</div>
<div class="t" style="left:1622px;top:671px;width:200px;text-align:center;font-size:23px;color:#555">78</div>
<div class="t" style="left:1813px;top:647px;width:200px;text-align:center;font-size:17px;color:#555">修改文件权限</div>
<div class="t" style="left:1813px;top:671px;width:200px;text-align:center;font-size:23px;color:#555">36</div>
<div class="t" style="left:2003px;top:647px;width:200px;text-align:center;font-size:17px;color:#555">修改所有者</div>
<div class="t" style="left:2003px;top:671px;width:200px;text-align:center;font-size:23px;color:#555">32</div>
<!-- MONITOR DIALOG -->
<div class="a" style="left:90px;top:572px;width:1197px;height:698px;background:#fff;box-shadow:0 2px 14px rgba(0,0,0,0.22);overflow:hidden">
  <div class="a" style="left:0;top:0;width:1197px;height:39px;background:#f8f8f8;border-bottom:1px solid #eee"></div>
  <div class="a" style="left:0;top:39px;width:109px;height:659px;background:#f0f0f0"></div>
  <div class="a" style="left:0;top:39px;width:109px;height:41px;background:#fff"></div>
  <div class="a" style="left:1183px;top:-20px;width:32px;height:32px;border-radius:50%;background:#777;border:2px solid #fff"></div><div class="a" style="left:1192px;top:-3px;width:2px;height:10px;background:#fff;transform:rotate(45deg)"></div>
</div>
<svg style="left:101px;top:581px" width="20" height="20" viewBox="0 0 20 20"><circle cx="10" cy="10" r="9" fill="none" stroke="#3d9ad8" stroke-width="1.5"/><circle cx="10" cy="10" r="5.5" fill="none" stroke="#3d9ad8" stroke-width="1.3"/><circle cx="10" cy="10" r="2" fill="#3d9ad8"/><path d="M10 0 V20 M0 10 H20" stroke="#3d9ad8" stroke-width="1"/></svg>
<div class="t" style="left:128px;top:583px;font-size:14px;color:#333">网站监控报表-4.0.2</div>
<svg style="left:1173px;top:583px" width="14" height="15" viewBox="0 0 14 15"><path d="M9.5 1 H1 V14 H11 V7" fill="none" stroke="#999" stroke-width="1.1"/><path d="M3 5 H6.5 M3 8 H8 M3 11 H8 M8.5 6 L13 1.5" stroke="#999" stroke-width="1.1"/></svg>
<div class="t g" style="left:1195px;top:584px;font-size:12.5px">需求反馈</div>
<div class="t" style="left:109px;top:626px;font-size:12px;color:#333">概览</div>
<div class="t" style="left:109px;top:666px;font-size:12px;color:#333">网站列表</div>
<div class="t" style="left:109px;top:706px;font-size:12px;color:#333">IP/地区</div>
<div class="t" style="left:109px;top:746px;font-size:12px;color:#333">访客分析</div>
<div class="t" style="left:109px;top:786px;font-size:12px;color:#333">蜘蛛管理</div>
<div class="t" style="left:109px;top:826px;font-size:12px;color:#333">客户端统计</div>
<div class="t" style="left:109px;top:866px;font-size:12px;color:#333">URI/来源</div>
<div class="t" style="left:109px;top:906px;font-size:12px;color:#333">状态码统计</div>
<div class="t" style="left:109px;top:946px;font-size:12px;color:#333">错误日志</div>
<div class="t" style="left:109px;top:986px;font-size:12px;color:#333">网站日志</div>
<div class="t" style="left:109px;top:1026px;font-size:12px;color:#333">慢日志</div>
<div class="t" style="left:109px;top:1066px;font-size:12px;color:#333">封禁IP</div>
<div class="t" style="left:109px;top:1106px;font-size:12px;color:#333">全局设置</div>
<div class="t" style="left:109px;top:1146px;font-size:12px;color:#333">SEO优化</div>
<div class="t" style="left:109px;top:1186px;font-size:12px;color:#333">大屏管理</div>
<div class="t" style="left:219px;top:640px;font-size:13px;color:#333">网站:</div>
<div class="a" style="left:255px;top:632px;width:132px;height:28px;border:1px solid #20a53a;background:#fff"></div>
<div class="a" style="left:267px;top:642px;width:56px;height:10px;background:#e2e2e2;filter:blur(2px)"></div>
<svg style="left:368px;top:642px" width="13" height="8" viewBox="0 0 13 8"><path d="M1 1 L6.5 6.5 L12 1" fill="none" stroke="#333" stroke-width="1.5"/></svg>
<div class="t" style="left:400px;top:640px;font-size:13px;color:#333">时间:</div>
<div class="a" style="left:440px;top:632px;width:491px;height:30px;border:1px solid #ddd;background:#fff"></div>
<div class="a" style="left:440px;top:632px;width:45px;height:30px;background:#20a53a;color:#fff;font-size:13px;line-height:30px;text-align:center">今日</div>
<div class="a" style="left:485px;top:633px;width:45px;height:28px;border-right:1px solid #ddd;color:#333;font-size:13px;line-height:28px;text-align:center">昨日</div>
<div class="a" style="left:530px;top:633px;width:52px;height:28px;border-right:1px solid #ddd;color:#333;font-size:13px;line-height:28px;text-align:center">近7天</div>
<div class="a" style="left:582px;top:633px;width:59px;height:28px;border-right:1px solid #ddd;color:#333;font-size:13px;line-height:28px;text-align:center">近30天</div>
<div class="t" style="left:652px;top:641px;font-size:12.5px;color:#aaa">自定义时间</div>
<svg style="left:910px;top:643px" width="12" height="8" viewBox="0 0 12 8"><path d="M1 1 L6 6 L11 1" fill="none" stroke="#333" stroke-width="1.5"/></svg>
<svg style="left:938px;top:633px" width="28" height="28" viewBox="0 0 28 28"><circle cx="14" cy="14" r="13" fill="none" stroke="#ddd" stroke-width="1.2"/><path d="M14 1 A13 13 0 0 1 16.5 26.8" fill="none" stroke="#20a53a" stroke-width="1.4"/></svg>
<div class="t" style="left:938px;top:641px;width:28px;text-align:center;font-size:12px;color:#666">29</div>
<div class="a" style="left:1179px;top:632px;width:89px;height:30px;border:1px solid #ddd;background:#fff"></div>
<div class="a" style="left:1179px;top:632px;width:45px;height:30px;background:#20a53a;color:#fff;font-size:13px;line-height:30px;text-align:center">图表</div>
<div class="a" style="left:1224px;top:633px;width:44px;height:28px;color:#333;font-size:13px;line-height:28px;text-align:center">列表</div>
<div class="t" style="left:219px;top:685px;font-size:13px;color:#333">10分钟活跃用户:</div>
<div class="t" style="left:317px;top:680px;font-size:19px;color:#eea54a">2854</div>
<svg style="left:0;top:0" width="400" height="800"><g stroke="#20a53a" stroke-width="6.2" stroke-linecap="round"><path d="M234.7 721.3 V759.5"/><path d="M245.3 715 V759.5"/><path d="M256 727 V759.5"/><path d="M266.5 729.3 V759.5"/><path d="M277 726.8 V759.5"/><path d="M287.8 724.5 V759.5"/><path d="M298.4 727 V759.5"/><path d="M309 718.2 V759.5"/><path d="M319.6 727 V759.5"/></g><path d="M221.5 761.2 H227" stroke="#20a53a" stroke-width="2"/></svg>
<div class="a" style="left:391px;top:677px;width:877px;height:84px;background:#fafafa;border:1px solid #e3e3e3;border-radius:4px"></div>
<div class="t" style="left:412px;top:686px;font-size:12.5px;color:#999">浏览量(PV)</div><svg style="left:477px;top:685px" width="14" height="14" viewBox="0 0 14 14"><circle cx="7" cy="7" r="6.3" fill="none" stroke="#ccc" stroke-width="1"/><text x="7" y="10.8" font-size="10" text-anchor="middle" fill="#ccc" font-family="Liberation Sans">?</text></svg><div class="t" style="left:412px;top:707px;font-size:19px;color:#333">568,436</div><div class="t" style="left:412px;top:737px;font-size:12.5px;color:#999">872,099</div>
<div class="t" style="left:558px;top:686px;font-size:12.5px;color:#999">访客量(UV)</div><svg style="left:624px;top:685px" width="14" height="14" viewBox="0 0 14 14"><circle cx="7" cy="7" r="6.3" fill="none" stroke="#ccc" stroke-width="1"/><text x="7" y="10.8" font-size="10" text-anchor="middle" fill="#ccc" font-family="Liberation Sans">?</text></svg><div class="t" style="left:558px;top:707px;font-size:19px;color:#333">273,745</div><div class="t" style="left:558px;top:737px;font-size:12.5px;color:#999">285,424</div>
<div class="t" style="left:704px;top:686px;font-size:12.5px;color:#999">IP数</div><svg style="left:732px;top:685px" width="14" height="14" viewBox="0 0 14 14"><circle cx="7" cy="7" r="6.3" fill="none" stroke="#ccc" stroke-width="1"/><text x="7" y="10.8" font-size="10" text-anchor="middle" fill="#ccc" font-family="Liberation Sans">?</text></svg><div class="t" style="left:704px;top:707px;font-size:19px;color:#333">637,505</div><div class="t" style="left:704px;top:737px;font-size:12.5px;color:#999">850,518</div>
<div class="t" style="left:850px;top:686px;font-size:12.5px;color:#999">请求</div><svg style="left:879px;top:685px" width="14" height="14" viewBox="0 0 14 14"><circle cx="7" cy="7" r="6.3" fill="none" stroke="#ccc" stroke-width="1"/><text x="7" y="10.8" font-size="10" text-anchor="middle" fill="#ccc" font-family="Liberation Sans">?</text></svg><div class="t" style="left:850px;top:707px;font-size:19px;color:#333">39,498,924</div><div class="t" style="left:850px;top:737px;font-size:12.5px;color:#999">61,163,441</div>
<div class="t" style="left:996px;top:686px;font-size:12.5px;color:#999">流量</div><svg style="left:1025px;top:685px" width="14" height="14" viewBox="0 0 14 14"><circle cx="7" cy="7" r="6.3" fill="none" stroke="#ccc" stroke-width="1"/><text x="7" y="10.8" font-size="10" text-anchor="middle" fill="#ccc" font-family="Liberation Sans">?</text></svg><div class="t" style="left:996px;top:707px;font-size:19px;color:#333">223.36 GB</div><div class="t" style="left:996px;top:737px;font-size:12.5px;color:#999">200.08 GB</div>
<div class="t" style="left:1142px;top:686px;font-size:12.5px;color:#999">蜘蛛爬虫</div><svg style="left:1195px;top:685px" width="14" height="14" viewBox="0 0 14 14"><circle cx="7" cy="7" r="6.3" fill="none" stroke="#ccc" stroke-width="1"/><text x="7" y="10.8" font-size="10" text-anchor="middle" fill="#ccc" font-family="Liberation Sans">?</text></svg><div class="t" style="left:1142px;top:707px;font-size:19px;color:#333">323,791</div><div class="t" style="left:1142px;top:737px;font-size:12.5px;color:#999">636,439</div>
<div class="t" style="left:224px;top:791px;font-size:12.5px;color:#666">趋势指标:</div>
<svg style="left:287.3px;top:790px" width="14" height="14" viewBox="0 0 14 14"><circle cx="7" cy="7" r="6" fill="#fff" stroke="#20a53a" stroke-width="1.3"/><circle cx="7" cy="7" r="3.8" fill="#20a53a"/></svg><div class="t" style="left:309px;top:791px;font-size:12.5px;color:#333">浏览量(PV)</div>
<svg style="left:391.6px;top:790px" width="14" height="14" viewBox="0 0 14 14"><circle cx="7" cy="7" r="6" fill="#fff" stroke="#777" stroke-width="1.1"/></svg><div class="t" style="left:420px;top:791px;font-size:12.5px;color:#333">访客量(UV)</div>
<svg style="left:496.5px;top:790px" width="14" height="14" viewBox="0 0 14 14"><circle cx="7" cy="7" r="6" fill="#fff" stroke="#777" stroke-width="1.1"/></svg><div class="t" style="left:516px;top:791px;font-size:12.5px;color:#333">IP数</div>
<svg style="left:563.7px;top:790px" width="14" height="14" viewBox="0 0 14 14"><circle cx="7" cy="7" r="6" fill="#fff" stroke="#777" stroke-width="1.1"/></svg><div class="t" style="left:585px;top:791px;font-size:12.5px;color:#333">流量</div>
<svg style="left:631.8px;top:790px" width="14" height="14" viewBox="0 0 14 14"><circle cx="7" cy="7" r="6" fill="#fff" stroke="#777" stroke-width="1.1"/></svg><div class="t" style="left:653px;top:791px;font-size:12.5px;color:#333">请求</div>
<div class="t" style="left:918px;top:791px;font-size:12.5px;color:#666">颗粒度:</div>
<svg style="left:970.3px;top:790px" width="14" height="14" viewBox="0 0 14 14"><circle cx="7" cy="7" r="6" fill="#fff" stroke="#777" stroke-width="1.1"/></svg><div class="t" style="left:988px;top:791px;font-size:12.5px;color:#333">分钟</div>
<svg style="left:1024px;top:790px" width="14" height="14" viewBox="0 0 14 14"><circle cx="7" cy="7" r="6" fill="#fff" stroke="#20a53a" stroke-width="1.3"/><circle cx="7" cy="7" r="3.8" fill="#20a53a"/></svg><div class="t" style="left:1042px;top:791px;font-size:12.5px;color:#333">小时</div>
<div class="t" style="left:1100px;top:791px;font-size:12.5px;color:#666">对比:</div>
<svg style="left:1140px;top:791px" width="14" height="14" viewBox="0 0 14 14"><rect x="0" y="0" width="14" height="14" rx="1.5" fill="#20a53a"/><path d="M3 7 L6 10 L11 4" fill="none" stroke="#fff" stroke-width="1.8"/></svg><div class="t" style="left:1158px;top:791px;font-size:12.5px;color:#333">前一天</div>
<div class="a" style="left:1198px;top:791px;width:14px;height:14px;border:1px solid #ccc;border-radius:1.5px;background:#fff"></div><div class="t" style="left:1216px;top:791px;font-size:12.5px;color:#333">上周同期</div>
<svg style="left:0;top:0" width="1300" height="1100"><defs><linearGradient id="gG" x1="0" y1="824" x2="0" y2="1004" gradientUnits="userSpaceOnUse"><stop offset="0" stop-color="#20a53a" stop-opacity="0.68"/><stop offset="1" stop-color="#20a53a" stop-opacity="0.02"/></linearGradient><linearGradient id="gP" x1="0" y1="866" x2="0" y2="1004" gradientUnits="userSpaceOnUse"><stop offset="0" stop-color="#d2e6fb" stop-opacity="0.5"/><stop offset="1" stop-color="#d2e6fb" stop-opacity="0.12"/></linearGradient></defs><path d="M285 824.5 H1227" stroke="#e6e6e6" stroke-width="1"/><text x="277" y="828" font-size="12.5" text-anchor="end" fill="#a8a8a8" font-family="Liberation Sans">60,000</text><path d="M285 854.5 H1227" stroke="#e6e6e6" stroke-width="1"/><text x="277" y="858" font-size="12.5" text-anchor="end" fill="#a8a8a8" font-family="Liberation Sans">50,000</text><path d="M285 884.5 H1227" stroke="#e6e6e6" stroke-width="1"/><text x="277" y="888" font-size="12.5" text-anchor="end" fill="#a8a8a8" font-family="Liberation Sans">40,000</text><path d="M285 914.5 H1227" stroke="#e6e6e6" stroke-width="1"/><text x="277" y="918" font-size="12.5" text-anchor="end" fill="#a8a8a8" font-family="Liberation Sans">30,000</text><path d="M285 944.5 H1227" stroke="#e6e6e6" stroke-width="1"/><text x="277" y="948" font-size="12.5" text-anchor="end" fill="#a8a8a8" font-family="Liberation Sans">20,000</text><path d="M285 974.5 H1227" stroke="#e6e6e6" stroke-width="1"/><text x="277" y="978" font-size="12.5" text-anchor="end" fill="#a8a8a8" font-family="Liberation Sans">10,000</text><text x="277" y="1008" font-size="12.5" text-anchor="end" fill="#a8a8a8" font-family="Liberation Sans">0</text><path d="M285.0 917.9 C305.5 915.5 305.5 914.0 325.9 913.1 C346.4 913.1 346.4 914.3 366.9 914.3 C387.4 913.4 387.4 912.7 407.9 909.5 C428.3 906.3 428.3 909.5 448.8 901.4 C469.3 893.1 469.3 889.8 489.8 876.5 C510.2 863.2 510.2 856.6 530.7 848.3 C551.2 843.4 551.2 843.4 571.7 843.4 C592.1 845.5 592.1 845.0 612.6 856.4 C633.1 867.8 633.1 876.0 653.5 889.1 C674.0 902.2 674.0 908.9 694.5 908.9 C715.0 907.8 715.0 884.9 735.5 884.9 C755.9 886.4 755.9 908.6 776.4 914.9 C796.9 914.9 796.9 910.1 817.4 910.1 C837.8 911.9 837.8 913.1 858.3 922.1 C878.8 931.1 878.8 925.6 899.2 946.1 C919.7 966.6 919.7 989.5 940.2 1004.0 C960.7 1004.0 960.7 1004.0 981.2 1004.0 C1001.6 1004.0 1001.6 1004.0 1022.1 1004.0 C1042.6 1004.0 1042.6 1004.0 1063.1 1004.0 C1083.5 1004.0 1083.5 1004.0 1104.0 1004.0 C1124.5 1004.0 1124.5 1004.0 1145.0 1004.0 C1165.4 1004.0 1165.4 1004.0 1185.9 1004.0 C1206.4 1004.0 1206.4 1004.0 1226.8 1004.0 L1227 1004 L285 1004 Z" fill="url(#gG)"/><path d="M285.0 880.4 C305.5 876.2 305.5 874.9 325.9 872.0 C346.4 869.1 346.4 870.1 366.9 868.8 C387.4 867.4 387.4 866.6 407.9 866.6 C428.3 868.6 428.3 872.4 448.8 876.8 C469.3 881.1 469.3 880.2 489.8 884.0 C510.2 887.8 510.2 889.8 530.7 891.8 C551.2 892.0 551.2 892.0 571.7 892.0 C592.1 889.3 592.1 880.7 612.6 880.7 C633.1 881.5 633.1 889.3 653.5 895.1 C674.0 900.9 674.0 898.3 694.5 903.8 C715.0 909.3 715.0 917.0 735.5 917.0 C755.9 915.0 755.9 898.7 776.4 895.7 C796.9 895.7 796.9 904.0 817.4 905.0 C837.8 905.0 837.8 904.2 858.3 899.9 C878.8 895.5 878.8 887.6 899.2 887.6 C919.7 888.5 919.7 899.0 940.2 903.5 C960.7 905.6 960.7 905.6 981.2 905.6 C1001.6 904.9 1001.6 901.2 1022.1 900.8 C1042.6 900.8 1042.6 900.8 1063.1 904.1 C1083.5 907.8 1083.5 913.0 1104.0 915.5 C1124.5 915.5 1124.5 915.4 1145.0 914.0 C1165.4 912.6 1165.4 912.5 1185.9 910.1 C1206.4 907.7 1206.4 907.2 1226.8 904.4 L1227 1004 L285 1004 Z" fill="url(#gP)"/><path d="M571.5 826 V1004" stroke="#bbb" stroke-width="1" stroke-dasharray="4 3"/><path d="M285.0 917.9 C305.5 915.5 305.5 914.0 325.9 913.1 C346.4 913.1 346.4 914.3 366.9 914.3 C387.4 913.4 387.4 912.7 407.9 909.5 C428.3 906.3 428.3 909.5 448.8 901.4 C469.3 893.1 469.3 889.8 489.8 876.5 C510.2 863.2 510.2 856.6 530.7 848.3 C551.2 843.4 551.2 843.4 571.7 843.4 C592.1 845.5 592.1 845.0 612.6 856.4 C633.1 867.8 633.1 876.0 653.5 889.1 C674.0 902.2 674.0 908.9 694.5 908.9 C715.0 907.8 715.0 884.9 735.5 884.9 C755.9 886.4 755.9 908.6 776.4 914.9 C796.9 914.9 796.9 910.1 817.4 910.1 C837.8 911.9 837.8 913.1 858.3 922.1 C878.8 931.1 878.8 925.6 899.2 946.1 C919.7 966.6 919.7 989.5 940.2 1004.0 C960.7 1004.0 960.7 1004.0 981.2 1004.0 C1001.6 1004.0 1001.6 1004.0 1022.1 1004.0 C1042.6 1004.0 1042.6 1004.0 1063.1 1004.0 C1083.5 1004.0 1083.5 1004.0 1104.0 1004.0 C1124.5 1004.0 1124.5 1004.0 1145.0 1004.0 C1165.4 1004.0 1165.4 1004.0 1185.9 1004.0 C1206.4 1004.0 1206.4 1004.0 1226.8 1004.0" fill="none" stroke="#20a53a" stroke-width="2.4"/><circle cx="285.0" cy="880.4" r="2.6" fill="#fff" stroke="#bcd9f7" stroke-width="2"/><circle cx="325.9" cy="872.0" r="2.6" fill="#fff" stroke="#bcd9f7" stroke-width="2"/><circle cx="366.9" cy="868.8" r="2.6" fill="#fff" stroke="#bcd9f7" stroke-width="2"/><circle cx="407.9" cy="866.6" r="2.6" fill="#fff" stroke="#bcd9f7" stroke-width="2"/><circle cx="448.8" cy="876.8" r="2.6" fill="#fff" stroke="#bcd9f7" stroke-width="2"/><circle cx="489.8" cy="884.0" r="2.6" fill="#fff" stroke="#bcd9f7" stroke-width="2"/><circle cx="530.7" cy="891.8" r="2.6" fill="#fff" stroke="#bcd9f7" stroke-width="2"/><circle cx="571.7" cy="892.0" r="2.6" fill="#fff" stroke="#bcd9f7" stroke-width="2"/><circle cx="612.6" cy="880.7" r="2.6" fill="#fff" stroke="#bcd9f7" stroke-width="2"/><circle cx="653.5" cy="895.1" r="2.6" fill="#fff" stroke="#bcd9f7" stroke-width="2"/><circle cx="694.5" cy="903.8" r="2.6" fill="#fff" stroke="#bcd9f7" stroke-width="2"/><circle cx="735.5" cy="917.0" r="2.6" fill="#fff" stroke="#bcd9f7" stroke-width="2"/><circle cx="776.4" cy="895.7" r="2.6" fill="#fff" stroke="#bcd9f7" stroke-width="2"/><circle cx="817.4" cy="905.0" r="2.6" fill="#fff" stroke="#bcd9f7" stroke-width="2"/><circle cx="858.3" cy="899.9" r="2.6" fill="#fff" stroke="#bcd9f7" stroke-width="2"/><circle cx="899.2" cy="887.6" r="2.6" fill="#fff" stroke="#bcd9f7" stroke-width="2"/><circle cx="940.2" cy="903.5" r="2.6" fill="#fff" stroke="#bcd9f7" stroke-width="2"/><circle cx="981.2" cy="905.6" r="2.6" fill="#fff" stroke="#bcd9f7" stroke-width="2"/><circle cx="1022.1" cy="900.8" r="2.6" fill="#fff" stroke="#bcd9f7" stroke-width="2"/><circle cx="1063.1" cy="904.1" r="2.6" fill="#fff" stroke="#bcd9f7" stroke-width="2"/><circle cx="1104.0" cy="915.5" r="2.6" fill="#fff" stroke="#bcd9f7" stroke-width="2"/><circle cx="1145.0" cy="914.0" r="2.6" fill="#fff" stroke="#bcd9f7" stroke-width="2"/><circle cx="1185.9" cy="910.1" r="2.6" fill="#fff" stroke="#bcd9f7" stroke-width="2"/><circle cx="1226.8" cy="904.4" r="2.6" fill="#fff" stroke="#bcd9f7" stroke-width="2"/><circle cx="285.0" cy="917.9" r="2.6" fill="#fff" stroke="#20a53a" stroke-width="2"/><circle cx="325.9" cy="913.1" r="2.6" fill="#fff" stroke="#20a53a" stroke-width="2"/><circle cx="366.9" cy="914.3" r="2.6" fill="#fff" stroke="#20a53a" stroke-width="2"/><circle cx="407.9" cy="909.5" r="2.6" fill="#fff" stroke="#20a53a" stroke-width="2"/><circle cx="448.8" cy="901.4" r="2.6" fill="#fff" stroke="#20a53a" stroke-width="2"/><circle cx="489.8" cy="876.5" r="2.6" fill="#fff" stroke="#20a53a" stroke-width="2"/><circle cx="530.7" cy="848.3" r="2.6" fill="#fff" stroke="#20a53a" stroke-width="2"/><circle cx="571.7" cy="843.4" r="3.6" fill="#fff" stroke="#20a53a" stroke-width="2"/><circle cx="612.6" cy="856.4" r="2.6" fill="#fff" stroke="#20a53a" stroke-width="2"/><circle cx="653.5" cy="889.1" r="2.6" fill="#fff" stroke="#20a53a" stroke-width="2"/><circle cx="694.5" cy="908.9" r="2.6" fill="#fff" stroke="#20a53a" stroke-width="2"/><circle cx="735.5" cy="884.9" r="2.6" fill="#fff" stroke="#20a53a" stroke-width="2"/><circle cx="776.4" cy="914.9" r="2.6" fill="#fff" stroke="#20a53a" stroke-width="2"/><circle cx="817.4" cy="910.1" r="2.6" fill="#fff" stroke="#20a53a" stroke-width="2"/><circle cx="858.3" cy="922.1" r="2.6" fill="#fff" stroke="#20a53a" stroke-width="2"/><circle cx="899.2" cy="946.1" r="2.6" fill="#fff" stroke="#20a53a" stroke-width="2"/><circle cx="940.2" cy="1004.0" r="2.6" fill="#fff" stroke="#20a53a" stroke-width="2"/><circle cx="981.2" cy="1004.0" r="2.6" fill="#fff" stroke="#20a53a" stroke-width="2"/><circle cx="1022.1" cy="1004.0" r="2.6" fill="#fff" stroke="#20a53a" stroke-width="2"/><circle cx="1063.1" cy="1004.0" r="2.6" fill="#fff" stroke="#20a53a" stroke-width="2"/><circle cx="1104.0" cy="1004.0" r="2.6" fill="#fff" stroke="#20a53a" stroke-width="2"/><circle cx="1145.0" cy="1004.0" r="2.6" fill="#fff" stroke="#20a53a" stroke-width="2"/><circle cx="1185.9" cy="1004.0" r="2.6" fill="#fff" stroke="#20a53a" stroke-width="2"/><circle cx="1226.8" cy="1004.0" r="2.6" fill="#fff" stroke="#20a53a" stroke-width="2"/><path d="M285 1004.5 H1227" stroke="#6e7079" stroke-width="1"/><path d="M285.0 1004 V1009" stroke="#6e7079"/><text x="285.0" y="1021" font-size="12.5" text-anchor="middle" fill="#666" font-family="Liberation Sans">0:00</text><path d="M407.9 1004 V1009" stroke="#6e7079"/><text x="407.9" y="1021" font-size="12.5" text-anchor="middle" fill="#666" font-family="Liberation Sans">3:00</text><path d="M530.7 1004 V1009" stroke="#6e7079"/><text x="530.7" y="1021" font-size="12.5" text-anchor="middle" fill="#666" font-family="Liberation Sans">6:00</text><path d="M653.5 1004 V1009" stroke="#6e7079"/><text x="653.5" y="1021" font-size="12.5" text-anchor="middle" fill="#666" font-family="Liberation Sans">9:00</text><path d="M776.4 1004 V1009" stroke="#6e7079"/><text x="776.4" y="1021" font-size="12.5" text-anchor="middle" fill="#666" font-family="Liberation Sans">12:00</text><path d="M899.2 1004 V1009" stroke="#6e7079"/><text x="899.2" y="1021" font-size="12.5" text-anchor="middle" fill="#666" font-family="Liberation Sans">15:00</text><path d="M1022.1 1004 V1009" stroke="#6e7079"/><text x="1022.1" y="1021" font-size="12.5" text-anchor="middle" fill="#666" font-family="Liberation Sans">18:00</text><path d="M1145.0 1004 V1009" stroke="#6e7079"/><text x="1145.0" y="1021" font-size="12.5" text-anchor="middle" fill="#666" font-family="Liberation Sans">21:00</text></svg>
<div class="a" style="left:732px;top:865px;width:66px;height:12px;background:#ececec;filter:blur(2px);border-radius:3px"></div>
<div class="a" style="left:589px;top:921px;width:220px;height:101px;background:rgba(255,255,255,0.88);border-radius:6px;box-shadow:0 1px 4px rgba(0,0,0,0.18);overflow:hidden">
<div class="a" style="left:0;top:0;width:220px;height:41px;background:#f2f2f2"></div></div>
<div class="t" style="left:598px;top:936px;font-size:12.5px;color:#666">7:00</div>
<div class="t" style="left:699px;top:936px;width:100px;text-align:right;font-size:12.5px;color:#666">浏览量(PV)</div>
<div class="a" style="left:606px;top:976px;width:10px;height:10px;border-radius:50%;background:#20a53a"></div>
<div class="t" style="left:621px;top:975px;font-size:12.5px;color:#666">今日</div>
<div class="t" style="left:692px;top:975px;width:100px;text-align:right;font-size:12.5px;color:#666">53519</div>
<div class="a" style="left:606px;top:1002px;width:10px;height:10px;border-radius:50%;background:#b9dafa"></div>
<div class="t" style="left:621px;top:1001px;font-size:12.5px;color:#666">前一天</div>
<div class="t" style="left:692px;top:1001px;width:100px;text-align:right;font-size:12.5px;color:#666">37321</div>
<div class="t" style="left:219px;top:1051px;font-size:12.5px;color:#666">性能/负载:</div>
<div class="a" style="left:289px;top:1052px;width:10px;height:10px;border-radius:50%;background:#20a53a"></div>
<div class="t" style="left:305px;top:1051px;font-size:12.5px;color:#333">QPS: 843次</div>
<div class="a" style="left:412px;top:1052px;width:10px;height:10px;border-radius:50%;background:#7ab8f5"></div>
<div class="t" style="left:428px;top:1051px;font-size:12.5px;color:#666">平均响应耗时:</div>
<div class="t" style="left:517px;top:1051px;font-size:12.5px;color:#333">16ms</div>
<div class="t" style="left:742px;top:1051px;font-size:12.5px;color:#666">网站流量:</div>
<div class="a" style="left:807px;top:1052px;width:10px;height:10px;border-radius:50%;background:#20a53a"></div>
<div class="t" style="left:823px;top:1051px;font-size:12.5px;color:#333">上行: 3283.93 KB</div>
<div class="a" style="left:946px;top:1052px;width:10px;height:10px;border-radius:50%;background:#7ab8f5"></div>
<div class="t" style="left:963px;top:1051px;font-size:12.5px;color:#333">下行: 267.80 KB</div>
<svg style="left:0;top:0" width="1300" height="1300"><defs><linearGradient id="gQ" x1="0" y1="1160" x2="0" y2="1224" gradientUnits="userSpaceOnUse"><stop offset="0" stop-color="#20a53a" stop-opacity="0.07"/><stop offset="1" stop-color="#20a53a" stop-opacity="0.2"/></linearGradient><linearGradient id="gN" x1="0" y1="1160" x2="0" y2="1224" gradientUnits="userSpaceOnUse"><stop offset="0" stop-color="#20a53a" stop-opacity="0.08"/><stop offset="1" stop-color="#20a53a" stop-opacity="0.22"/></linearGradient></defs><path d="M259.5 1095.2 H699" stroke="#e3e3e3" stroke-width="1"/><text x="251" y="1099.2" font-size="12.5" text-anchor="end" fill="#666" font-family="Liberation Sans">2,100</text><path d="M259.5 1113.7 H699" stroke="#e3e3e3" stroke-width="1"/><text x="251" y="1117.7" font-size="12.5" text-anchor="end" fill="#666" font-family="Liberation Sans">1,800</text><path d="M259.5 1132.1 H699" stroke="#e3e3e3" stroke-width="1"/><text x="251" y="1136.1" font-size="12.5" text-anchor="end" fill="#666" font-family="Liberation Sans">1,500</text><path d="M259.5 1150.6 H699" stroke="#e3e3e3" stroke-width="1"/><text x="251" y="1154.6" font-size="12.5" text-anchor="end" fill="#666" font-family="Liberation Sans">1,200</text><path d="M259.5 1169.1 H699" stroke="#e3e3e3" stroke-width="1"/><text x="251" y="1173.1" font-size="12.5" text-anchor="end" fill="#666" font-family="Liberation Sans">900</text><path d="M259.5 1187.6 H699" stroke="#e3e3e3" stroke-width="1"/><text x="251" y="1191.6" font-size="12.5" text-anchor="end" fill="#666" font-family="Liberation Sans">600</text><path d="M259.5 1206.0 H699" stroke="#e3e3e3" stroke-width="1"/><text x="251" y="1210.0" font-size="12.5" text-anchor="end" fill="#666" font-family="Liberation Sans">300</text><text x="251" y="1228.5" font-size="12.5" text-anchor="end" fill="#666" font-family="Liberation Sans">0</text><path d="M259.5 1175.7 C290.9 1174.8 290.9 1174.3 322.3 1174.0 C353.7 1174.0 353.7 1174.0 385.1 1174.5 C416.5 1175.0 416.5 1176.0 447.9 1176.0 C479.2 1175.6 479.2 1174.6 510.6 1173.0 C542.0 1171.4 542.0 1170.8 573.4 1169.5 C604.8 1168.2 604.8 1167.7 636.2 1167.7 C667.6 1168.6 667.6 1170.4 699.0 1173.0 L699 1224 L259.5 1224 Z" fill="url(#gQ)"/><path d="M259.5 1175.7 C290.9 1174.8 290.9 1174.3 322.3 1174.0 C353.7 1174.0 353.7 1174.0 385.1 1174.5 C416.5 1175.0 416.5 1176.0 447.9 1176.0 C479.2 1175.6 479.2 1174.6 510.6 1173.0 C542.0 1171.4 542.0 1170.8 573.4 1169.5 C604.8 1168.2 604.8 1167.7 636.2 1167.7 C667.6 1168.6 667.6 1170.4 699.0 1173.0" fill="none" stroke="#20a53a" stroke-width="2.2"/><path d="M259.5 1221.5 H699" stroke="#7ab8f5" stroke-width="2.5"/><path d="M259.5 1224.8 H699" stroke="#4f6a88" stroke-width="1.2"/><path d="M259.5 1224 V1229" stroke="#555"/><text x="259.5" y="1242" font-size="12.5" text-anchor="middle" fill="#666" font-family="Liberation Sans">15:36:22</text><path d="M322.3 1224 V1229" stroke="#555"/><text x="322.3" y="1242" font-size="12.5" text-anchor="middle" fill="#666" font-family="Liberation Sans">15:36:25</text><path d="M385.1 1224 V1229" stroke="#555"/><text x="385.1" y="1242" font-size="12.5" text-anchor="middle" fill="#666" font-family="Liberation Sans">15:36:28</text><path d="M447.9 1224 V1229" stroke="#555"/><text x="447.9" y="1242" font-size="12.5" text-anchor="middle" fill="#666" font-family="Liberation Sans">15:36:31</text><path d="M510.6 1224 V1229" stroke="#555"/><text x="510.6" y="1242" font-size="12.5" text-anchor="middle" fill="#666" font-family="Liberation Sans">15:36:34</text><path d="M573.4 1224 V1229" stroke="#555"/><text x="573.4" y="1242" font-size="12.5" text-anchor="middle" fill="#666" font-family="Liberation Sans">15:36:37</text><path d="M636.2 1224 V1229" stroke="#555"/><text x="636.2" y="1242" font-size="12.5" text-anchor="middle" fill="#666" font-family="Liberation Sans">15:36:41</text><path d="M699.0 1224 V1229" stroke="#555"/><text x="699.0" y="1242" font-size="12.5" text-anchor="middle" fill="#666" font-family="Liberation Sans">15:36:44</text><path d="M802.4 1095.0 H1222" stroke="#e3e3e3" stroke-width="1"/><text x="794" y="1099.0" font-size="12.5" text-anchor="end" fill="#666" font-family="Liberation Sans">25,000</text><path d="M802.4 1121.0 H1222" stroke="#e3e3e3" stroke-width="1"/><text x="794" y="1125.0" font-size="12.5" text-anchor="end" fill="#666" font-family="Liberation Sans">20,000</text><path d="M802.4 1147.0 H1222" stroke="#e3e3e3" stroke-width="1"/><text x="794" y="1151.0" font-size="12.5" text-anchor="end" fill="#666" font-family="Liberation Sans">15,000</text><path d="M802.4 1173.0 H1222" stroke="#e3e3e3" stroke-width="1"/><text x="794" y="1177.0" font-size="12.5" text-anchor="end" fill="#666" font-family="Liberation Sans">10,000</text><path d="M802.4 1199.0 H1222" stroke="#e3e3e3" stroke-width="1"/><text x="794" y="1203.0" font-size="12.5" text-anchor="end" fill="#666" font-family="Liberation Sans">5,000</text><text x="794" y="1229.0" font-size="12.5" text-anchor="end" fill="#666" font-family="Liberation Sans">0</text><path d="M802.4 1211.3 C832.4 1211.3 832.4 1211.3 862.3 1211.3 C892.3 1200.7 892.3 1175.7 922.3 1168.9 C952.2 1168.9 952.2 1175.5 982.2 1184.2 C1012.2 1192.9 1012.2 1198.6 1042.1 1203.8 C1072.1 1204.7 1072.1 1204.7 1102.0 1204.7 C1132.0 1196.9 1132.0 1172.5 1162.0 1172.5 C1191.9 1173.3 1191.9 1190.2 1221.9 1207.8 L1221.9 1225 L802.4 1225 Z" fill="url(#gN)"/><path d="M802.4 1211.3 C832.4 1211.3 832.4 1211.3 862.3 1211.3 C892.3 1200.7 892.3 1175.7 922.3 1168.9 C952.2 1168.9 952.2 1175.5 982.2 1184.2 C1012.2 1192.9 1012.2 1198.6 1042.1 1203.8 C1072.1 1204.7 1072.1 1204.7 1102.0 1204.7 C1132.0 1196.9 1132.0 1172.5 1162.0 1172.5 C1191.9 1173.3 1191.9 1190.2 1221.9 1207.8" fill="none" stroke="#20a53a" stroke-width="2.2"/><path d="M802.4 1221.7 C832.4 1223.0 832.4 1224.0 862.3 1224.4 C892.3 1224.4 892.3 1223.3 922.3 1223.3 C952.2 1223.3 952.2 1224.3 982.2 1224.4 C1012.2 1224.4 1012.2 1224.3 1042.1 1223.7 C1072.1 1223.1 1072.1 1222.2 1102.0 1222.1 C1132.0 1222.1 1132.0 1222.9 1162.0 1223.4 C1191.9 1224.0 1191.9 1223.8 1221.9 1224.2" fill="none" stroke="#7ab8f5" stroke-width="2.2"/><path d="M802.4 1225.5 H1222" stroke="#4f6a88" stroke-width="1.2"/><circle cx="802.4" cy="1211.3" r="2.8" fill="#fff" stroke="#20a53a" stroke-width="1.8"/><circle cx="862.3" cy="1211.3" r="2.8" fill="#fff" stroke="#20a53a" stroke-width="1.8"/><circle cx="922.3" cy="1168.9" r="2.8" fill="#fff" stroke="#20a53a" stroke-width="1.8"/><circle cx="982.2" cy="1184.2" r="2.8" fill="#fff" stroke="#20a53a" stroke-width="1.8"/><circle cx="1042.1" cy="1203.8" r="2.8" fill="#fff" stroke="#20a53a" stroke-width="1.8"/><circle cx="1102.0" cy="1204.7" r="2.8" fill="#fff" stroke="#20a53a" stroke-width="1.8"/><circle cx="1162.0" cy="1172.5" r="2.8" fill="#fff" stroke="#20a53a" stroke-width="1.8"/><circle cx="1221.9" cy="1207.8" r="2.8" fill="#fff" stroke="#20a53a" stroke-width="1.8"/><circle cx="802.4" cy="1221.7" r="2.8" fill="#fff" stroke="#7ab8f5" stroke-width="1.8"/><circle cx="862.3" cy="1224.4" r="2.8" fill="#fff" stroke="#7ab8f5" stroke-width="1.8"/><circle cx="922.3" cy="1223.3" r="2.8" fill="#fff" stroke="#7ab8f5" stroke-width="1.8"/><circle cx="982.2" cy="1224.4" r="2.8" fill="#fff" stroke="#7ab8f5" stroke-width="1.8"/><circle cx="1042.1" cy="1223.7" r="2.8" fill="#fff" stroke="#7ab8f5" stroke-width="1.8"/><circle cx="1102.0" cy="1222.1" r="2.8" fill="#fff" stroke="#7ab8f5" stroke-width="1.8"/><circle cx="1162.0" cy="1223.4" r="2.8" fill="#fff" stroke="#7ab8f5" stroke-width="1.8"/><circle cx="1221.9" cy="1224.2" r="2.8" fill="#fff" stroke="#7ab8f5" stroke-width="1.8"/><path d="M802.4 1225 V1230" stroke="#555"/><text x="802.4" y="1242" font-size="12.5" text-anchor="middle" fill="#666" font-family="Liberation Sans">15:36:22</text><path d="M922.3 1225 V1230" stroke="#555"/><text x="922.3" y="1242" font-size="12.5" text-anchor="middle" fill="#666" font-family="Liberation Sans">15:36:28</text><path d="M1042.1 1225 V1230" stroke="#555"/><text x="1042.1" y="1242" font-size="12.5" text-anchor="middle" fill="#666" font-family="Liberation Sans">15:36:34</text><path d="M1162.0 1225 V1230" stroke="#555"/><text x="1162.0" y="1242" font-size="12.5" text-anchor="middle" fill="#666" font-family="Liberation Sans">15:36:41</text></svg>

</body></html>
